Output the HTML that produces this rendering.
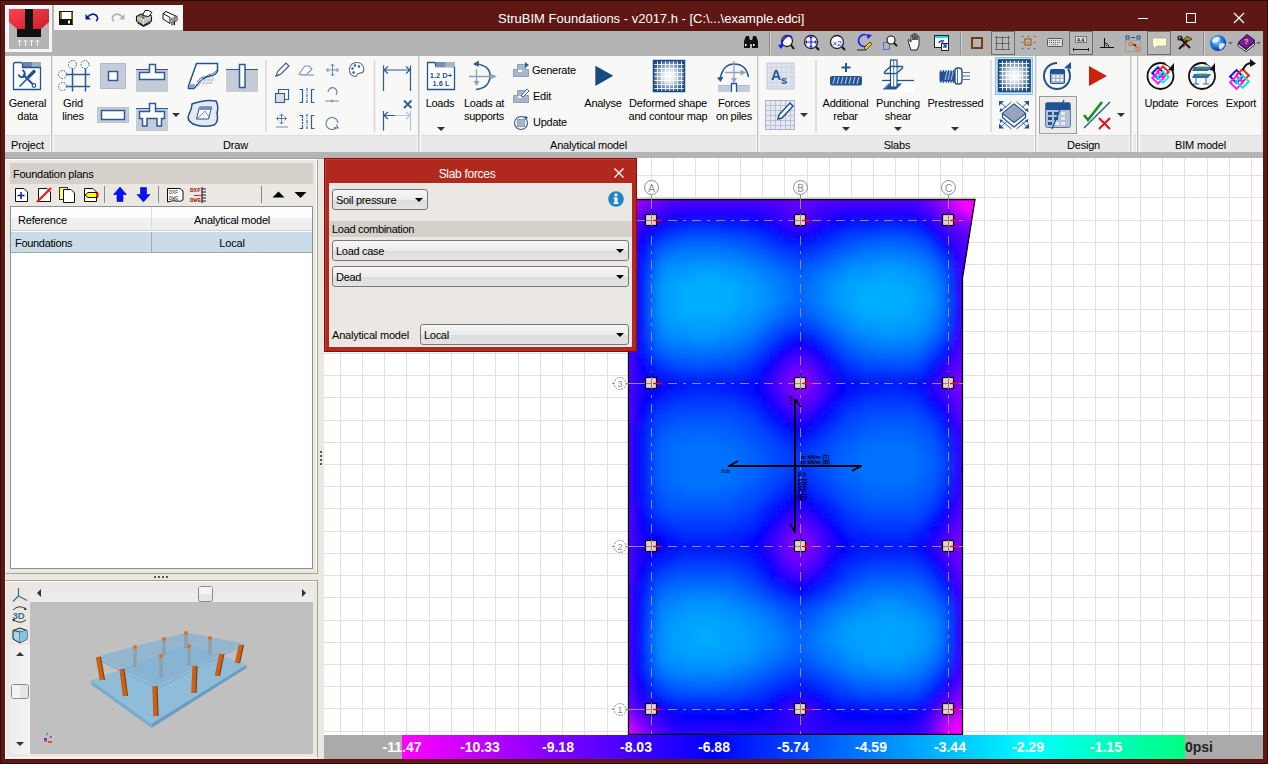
<!DOCTYPE html>
<html><head><meta charset="utf-8">
<style>
*{margin:0;padding:0;box-sizing:border-box}
html,body{width:1268px;height:764px;overflow:hidden}
body{position:relative;background:#5e1712;font-family:"Liberation Sans",sans-serif;font-size:12px;color:#000}
.a{position:absolute}
.lbl{position:absolute;font-size:11px;line-height:13px;text-align:center;color:#000;white-space:nowrap;letter-spacing:-0.25px;margin-top:1px}
.gl{position:absolute;top:135px;height:17px;background:#e9e9e9;border-top:1px solid #dedede;font-size:11px;line-height:19px;text-align:center;color:#000;letter-spacing:-0.2px}
.sep{position:absolute;top:56px;width:2px;height:96px;background:linear-gradient(90deg,#c4c4c4 50%,#e6e6e6 50%)}
</style></head><body>
<!-- frame -->
<div class="a" style="left:0;top:0;width:1268px;height:1px;background:#2c0a08"></div>
<div class="a" style="left:0;top:0;width:1px;height:764px;background:#3a0c09"></div>
<div class="a" style="left:1267px;top:0;width:1px;height:764px;background:#3a0c09"></div>
<div class="a" style="left:0;top:763px;width:1268px;height:1px;background:#2c0a08"></div>
<!-- title -->
<div class="a" style="left:498px;top:11px;width:310px;font-size:13px;line-height:15px;color:#fff;white-space:nowrap">StruBIM Foundations - v2017.h - [C:\...\example.edci]</div>
<!-- window controls -->
<div class="a" style="left:1138px;top:18px;width:10px;height:1px;background:#fff"></div>
<div class="a" style="left:1186px;top:13px;width:10px;height:10px;border:1px solid #fff"></div>
<svg class="a" style="left:1233px;top:12px" width="12" height="12"><path d="M1 1L11 11M11 1L1 11" stroke="#fff" stroke-width="1.3"/></svg>
<!-- logo -->
<div class="a" style="left:5px;top:5px;width:49px;height:51px;background:#b4b4b4"></div><div class="a" style="left:5px;top:5px;width:47px;height:47px;background:#f7f7f7"></div>
<div class="a" style="left:9px;top:9px;width:40px;height:40px;background:#b4b4b4"></div>
<!-- QAT -->
<div class="a" style="left:54px;top:5px;width:129px;height:25px;background:#f7f7f5"></div>
<!-- grey toolbar band -->
<div class="a" style="left:54px;top:30px;width:129px;height:1px;background:#b4b4b4"></div><div class="a" style="left:53px;top:31px;width:1210px;height:25px;background:#b4b4b4"></div>
<div class="a" style="left:5px;top:53px;width:48px;height:3px;background:#b4b4b4"></div>
<!-- ribbon -->
<div class="a" style="left:5px;top:56px;width:1258px;height:96px;background:#f8f8f7"></div>
<div class="a" style="left:5px;top:152px;width:1258px;height:6px;background:#b4b4b4"></div>

<!-- group labels -->
<div class="gl" style="left:5px;width:45px">Project</div>
<div class="gl" style="left:54px;width:363px">Draw</div>
<div class="gl" style="left:421px;width:335px">Analytical model</div>
<div class="gl" style="left:760px;width:274px">Slabs</div>
<div class="gl" style="left:1038px;width:91px">Design</div>
<div class="gl" style="left:1133px;width:3px"></div>
<div class="gl" style="left:1140px;width:121px">BIM model</div>
<div class="sep" style="left:51px"></div>
<div class="sep" style="left:418px"></div>
<div class="sep" style="left:757px"></div>
<div class="sep" style="left:1035px"></div>
<div class="sep" style="left:1130px"></div>
<div class="sep" style="left:1137px"></div>
<div class="a" style="left:1261px;top:56px;width:2px;height:96px;background:#e0e0e0"></div>
<!-- ribbon labels -->
<div class="lbl" style="left:5px;top:96px;width:45px">General<br>data</div>
<div class="lbl" style="left:53px;top:96px;width:40px">Grid<br>lines</div>
<div class="lbl" style="left:420px;top:96px;width:40px">Loads</div>
<div class="lbl" style="left:459px;top:96px;width:50px">Loads at<br>supports</div>
<div class="lbl" style="left:532px;top:63px;text-align:left">Generate</div>
<div class="lbl" style="left:533px;top:89px;text-align:left">Edit</div>
<div class="lbl" style="left:533px;top:115px;text-align:left">Update</div>
<div class="lbl" style="left:580px;top:96px;width:46px">Analyse</div>
<div class="lbl" style="left:624px;top:96px;width:88px">Deformed shape<br>and contour map</div>
<div class="lbl" style="left:712px;top:96px;width:44px">Forces<br>on piles</div>
<div class="lbl" style="left:818px;top:96px;width:55px">Additional<br>rebar</div>
<div class="lbl" style="left:873px;top:96px;width:50px">Punching<br>shear</div>
<div class="lbl" style="left:923px;top:96px;width:65px">Prestressed</div>
<div class="lbl" style="left:1140px;top:96px;width:43px">Update</div>
<div class="lbl" style="left:1182px;top:96px;width:40px">Forces</div>
<div class="lbl" style="left:1221px;top:96px;width:40px">Export</div>

<svg class="a" style="left:0;top:0" width="1268" height="158">
<defs>
<radialGradient id="glow" cx="50%" cy="50%" r="55%"><stop offset="0" stop-color="#fff"/><stop offset="0.35" stop-color="#dfe6f0"/><stop offset="1" stop-color="#1b4b86"/></radialGradient>
<linearGradient id="logoR" x1="0" y1="0" x2="1" y2="1"><stop offset="0" stop-color="#ff4450"/><stop offset="1" stop-color="#c81e2a"/></linearGradient>
</defs>
<!-- logo -->
<path d="M9 9H49V22L41 29H17L9 22Z" fill="url(#logoR)"/>
<rect x="25" y="9" width="8" height="20" fill="#111"/>
<rect x="17" y="29" width="24" height="8" fill="#111"/>
<g stroke="#f4f4f4" stroke-width="1" fill="none"><path d="M19.5 46V40M17.5 42L19.5 40L21.5 42M25.5 46V40M23.5 42L25.5 40L27.5 42M31.5 46V40M29.5 42L31.5 40L33.5 42M37.5 46V40M35.5 42L37.5 40L39.5 42"/></g>
<!-- QAT -->
<rect x="59.5" y="11.5" width="13" height="13" fill="#fff" stroke="#111"/><rect x="60" y="12" width="2" height="12" fill="#8a8420"/><rect x="71" y="12" width="1.5" height="12" fill="#8a8420"/><rect x="60" y="19" width="12" height="5.5" fill="#111"/><rect x="68" y="20.5" width="2" height="3" fill="#fff"/><rect x="62" y="12" width="8" height="6" fill="#fff"/>
<path d="M87 17.5Q92 12 96.5 15.5Q99 19 96 21" stroke="#0a1e9c" stroke-width="1.6" fill="none"/><path d="M85.5 14V19.5H91Z" fill="#0a1e9c"/>
<path d="M123 17.5Q118 12 113.5 15.5Q111 19 114 21" stroke="#b0b0b0" stroke-width="1.6" fill="none"/><path d="M124.5 14V19.5H119Z" fill="#b0b0b0"/>
<path d="M136.5 16.5L141 14L151.5 16L151.5 21L143.5 25.5L136.5 21Z" fill="#a8a8a8" stroke="#111" stroke-width="1.1"/><path d="M137 17L143 20L151 16.5L151 20.5L143.5 24.5L137 21Z" fill="#bdbdbd"/><path d="M143.5 20V25M137 17L143.5 20L151.5 16.5" stroke="#fff" stroke-width="0.6" fill="none"/>
<path d="M142.5 15.5L145 10.5H148.5L152 12.5L148.5 16.5Z" fill="#fff" stroke="#111" stroke-width="1"/>
<rect x="140" y="16" width="2" height="1.2" fill="#10e010"/><rect x="142" y="17" width="2" height="1.2" fill="#f01010"/>
<path d="M137.5 23L143.5 26.5L150.5 23" stroke="#111" stroke-width="1" fill="none"/>
<path d="M163 13.5L166 11.5L177 16.5V20.5L174 22V25M163 13.5V19L170 23.5V19M163 13.5L170 17.5V19" fill="#fff" stroke="#111" stroke-width="1"/><path d="M170.5 18L177 16.5V20.5L174 22L172 23Z" fill="#909090"/><path d="M172 22V25.5M174.5 21.5V25" stroke="#111" stroke-width="1"/><rect x="174" y="16" width="1.2" height="1.2" fill="#10d010"/><rect x="175.5" y="16" width="1.2" height="1.2" fill="#e01010"/>

<!-- General data -->
<rect x="23" y="62" width="9" height="6" fill="#6f82a8"/><rect x="32" y="62" width="9" height="6" fill="#9eabc6"/>
<path d="M13.5 89.5V64.5Q13.5 62.5 15.5 62.5H20.5Q22.5 62.5 22.5 64.5V67.5H40.5V89.5Z" fill="#fff" stroke="#1f5394" stroke-width="1.3"/>
<path d="M19.5 86.5L28.5 77.5" stroke="#1f5394" stroke-width="1.6"/><path d="M28 77.5L35 70.5" stroke="#1f5394" stroke-width="3.2"/>
<path d="M23 74.5L33 84.5" stroke="#1f5394" stroke-width="2"/><path d="M18.5 74.5Q20 78 23.5 77Q25.5 75 24.5 72L22.5 70" stroke="#1f5394" stroke-width="1.8" fill="none"/><circle cx="34" cy="85.5" r="1.8" fill="#fff" stroke="#1f5394" stroke-width="1.2"/>
<!-- Grid lines -->
<g stroke="#2d5b92" fill="none">
<path d="M72.5 68.5V91.5M85.5 68.5V91.5M66.5 74.5H90M66.5 86.5H90" stroke-width="1.5"/>
<g stroke-dasharray="1.6 1.2" stroke-width="1"><circle cx="72.5" cy="64.5" r="4"/><circle cx="85" cy="64.5" r="4"/><circle cx="62.5" cy="74.5" r="4"/><circle cx="62.5" cy="86.5" r="4"/></g>
</g>
<!-- column -->
<rect x="100.5" y="63.5" width="25" height="25" fill="#c6cbd8" stroke="#b0bad0"/><rect x="108.5" y="71.5" width="9" height="9" fill="#fff" stroke="#2d5b92" stroke-width="1.5"/>
<!-- footing -->
<rect x="136" y="69" width="32" height="23" fill="#c6cbd8"/><path d="M136 69.5H168" stroke="#2d5b92"/>
<path d="M139.5 72.5H149.5V64.5H155.5V72.5H164.5V79.5H139.5Z" fill="#fff" stroke="#2d5b92" stroke-width="1.5"/>
<!-- beam -->
<rect x="97.5" y="107.5" width="31" height="15" fill="#c6cbd8" stroke="#b8c0d2"/><rect x="101.5" y="110.5" width="23" height="9" fill="#fff" stroke="#2d5b92" stroke-width="1.5"/>
<!-- combined footing -->
<rect x="136" y="108" width="32" height="23" fill="#c6cbd8"/><path d="M136 108.5H168" stroke="#2d5b92"/>
<path d="M139.5 111.5H149.5V103.5H155.5V111.5H164.5V118.5H161.5V126H157V118.5H147V126H142.5V118.5H139.5Z" fill="#fff" stroke="#2d5b92" stroke-width="1.5"/>
<path d="M172 113H180L176 117Z" fill="#333"/>
<!-- slab -->
<path d="M188.5 86L196.5 63.5H217.5V71Q215 76 210 76Q203 77 197 85L194 88.5H188.5Z" fill="#fff" stroke="#1f5394" stroke-width="1.5"/>
<path d="M189 84H195L194 88H189Z" fill="#8fa0c0"/><path d="M197 82Q201 76 205 77Q209 74 212 74Q215 73 217 70" stroke="#1f5394" stroke-width="0.8" fill="none"/><path d="M198 87L202 79M202 87L206 79M206 86L210 77M210 84L213 76M197 83H213M199 80H215" stroke="#a8b4cc" stroke-width="0.7"/>
<!-- pile -->
<rect x="226" y="69" width="32" height="23" fill="#c6cbd8"/><path d="M226 69.5H258" stroke="#2d5b92"/><rect x="239.5" y="64.5" width="5.5" height="23" fill="#fff" stroke="#2d5b92" stroke-width="1.5"/>
<!-- irregular slab -->
<path d="M192 104Q205 99 216 101Q219 106 217 113Q219 122 214 125Q203 128 193 124Q186 120 189 114Q192 109 192 104Z" fill="#e6e9f0" stroke="#1f5394" stroke-width="1.5"/>
<path d="M196.5 119L199.5 107H211.5L208.5 119Z" fill="#fff" stroke="#1f5394" stroke-width="1"/><rect x="199" y="107" width="12" height="3" fill="#7b8db0"/><path d="M197 119L205 111L209 117" stroke="#5a6f98" stroke-width="0.8" fill="none"/>
<!-- separator small -->
<path d="M266 60V132" stroke="#d6d6d6" stroke-width="1.5"/>
<!-- small tools -->
<g stroke="#2d5b92" fill="none" stroke-width="1.1">
<path d="M276 76L278 71L286 63L289 66L281 74Z" fill="#fff"/><path d="M276 76L279 75" />
<path d="M299 74L305 66L309 66L312 69L306 75Z" fill="#fff" stroke="#7a8fb4"/><path d="M300 75H314" stroke="#a0b0c8" stroke-width="1.5"/>
<path d="M332.5 64V76M326.5 70H338.5M330.5 66L332.5 64L334.5 66M330.5 74L332.5 76L334.5 74M328.5 68L326.5 70L328.5 72M336.5 68L338.5 70L336.5 72" stroke="#6a88b4" stroke-width="1"/>
<path d="M357 62.5C351 62.5 349 67 349.5 71C350 76 356 78 357 75C358 72 361 74 363 72C365 69 363 62.5 357 62.5Z" fill="#fff" stroke="#5a7099"/>
</g>
<g fill="#2d5b92"><circle cx="355" cy="65.5" r="1.2"/><circle cx="359" cy="66.5" r="1.2"/><circle cx="352.5" cy="68.5" r="1.2"/><circle cx="353.5" cy="72.5" r="1.2"/></g>
<g stroke="#2d5b92" fill="none" stroke-width="1.1">
<rect x="275.5" y="93.5" width="9" height="9" fill="#d8dde8"/><path d="M278.5 93.5V89.5H288.5V99.5H284.5" />
<path d="M299.5 89.5H302.5V102.5H299.5M314.5 89.5H311.5V102.5H314.5" stroke-width="1.2"/><path d="M307 88V104" stroke-dasharray="3 1 1 1"/>
<path d="M328 92A4.5 4.5 0 1 1 336 95" stroke="#5a7ba8"/><path d="M325 101H339" stroke="#9fb0c8" stroke-width="1.5"/><circle cx="332" cy="101" r="1.5" fill="#8fa2c0" stroke="none"/>
<path d="M281.5 114V124M276.5 118.5H286.5M279.5 116L281.5 114L283.5 116M279.5 122L281.5 124L283.5 122M278.5 116.5L276.5 118.5L278.5 120.5M284.5 116.5L286.5 118.5L284.5 120.5" stroke="#5a7ba8" stroke-width="1"/>
<path d="M276 127H288" stroke="#9fb0c8" stroke-width="1.5"/>
<path d="M299.5 115.5H302.5V128.5H299.5M314.5 115.5H311.5V128.5H314.5" stroke-width="1.2"/><path d="M307 114V130" stroke-dasharray="3 1 1 1"/><path d="M302.5 118V126" stroke="#f8f8f7" stroke-dasharray="1 2"/>
<path d="M336 128A6 6 0 1 1 338 123" stroke="#5a7ba8"/><path d="M336.5 124.5L338 128L334 127.5" stroke="#5a7ba8"/>
</g>
<path d="M374.5 60V132" stroke="#d6d6d6" stroke-width="1.5"/>
<!-- dimension -->
<g stroke="#2d5b92" fill="none" stroke-width="1.2">
<path d="M383.5 65.5V91M410.5 65.5V91M384 70H410M388 66.5L384 70L388 73.5M406 66.5L410 70L406 73.5"/>
<path d="M383.5 111V130.5M384 115.5H395M388 112L384 115.5L388 119"/>
<path d="M395 115.5H410M406 112L410 115.5L406 119M410.5 111V130.5" stroke="#b8c4d8"/>
<path d="M404 100.5L411.5 108M411.5 100.5L404 108" stroke-width="1.8"/>
</g>

<!-- Loads -->
<path d="M427.5 89.5V62.5H435L436 66.5H454.5V89.5Z" fill="#fff" stroke="#1f5394" stroke-width="1.3"/>
<rect x="436" y="62" width="9" height="5" fill="#7b8db0"/><rect x="445" y="62" width="10" height="5" fill="#a5b2cb"/>
<text x="441" y="78" font-size="7.5" font-weight="bold" fill="#1f5394" text-anchor="middle" font-family="Liberation Sans">1.2 D+</text>
<text x="441" y="86" font-size="7.5" font-weight="bold" fill="#1f5394" text-anchor="middle" font-family="Liberation Sans">1.6 L</text>
<path d="M437 127H445L441 131Z" fill="#333"/>
<!-- loads at supports -->
<path d="M477 64Q491 66 490 77Q489 88 476 89.5" stroke="#2d5b92" stroke-width="1.6" fill="none"/><path d="M473 64L479 60.5L478.5 67Z" fill="#2d5b92"/>
<path d="M476.5 69V83M469 76.5H491" stroke="#8fa2c0" stroke-width="1.3"/><path d="M473.5 81L476.5 86L479.5 81Z" fill="#8fa2c0"/><path d="M490 73.5L497 76.5L490 79.5Z" fill="#8fa2c0"/>
<!-- generate/edit/update -->
<g fill="#a8b6cc" stroke="#7d91b3" stroke-width="0.8">
<path d="M513.5 69.5H517.5V64.5H525.5V69.5H528.5V76.5H513.5Z"/><rect x="518" y="70" width="4" height="2" fill="#fff" stroke="none"/>
<path d="M513.5 95.5H517.5V90.5H525.5V95.5H528.5V102.5H513.5Z"/><rect x="518" y="96" width="4" height="2" fill="#fff" stroke="none"/>
</g>
<path d="M525 62V68L529 65Z" fill="#2d5b92"/><path d="M521 96L527 89L529 91L523 97Z" fill="#fff" stroke="#2d5b92" stroke-width="0.9"/>
<circle cx="521" cy="123" r="6.5" fill="none" stroke="#2d5b92" stroke-width="1.1"/><rect x="517.5" y="119.5" width="7" height="7" fill="#a8b6cc" stroke="#7d91b3" stroke-width="0.8"/><path d="M524 116L528 117L526 120Z" fill="#2d5b92"/>
<!-- analyse -->
<path d="M595.3 65.7L613.3 75.8L595.3 86Z" fill="#174a84"/>
<!-- deformed -->
<rect x="653" y="60" width="32" height="32" fill="url(#glow)"/>
<g stroke="#fff" stroke-width="0.9" opacity="0.95"><path d="M657.5 61V91M661.5 61V91M665.5 61V91M669.5 61V91M673.5 61V91M677.5 61V91M681.5 61V91M654 64.5H684M654 68.5H684M654 72.5H684M654 76.5H684M654 80.5H684M654 84.5H684M654 88.5H684"/></g>
<rect x="653.5" y="60.5" width="31" height="31" fill="none" stroke="#1b4b86" stroke-width="1.5"/>
<!-- forces on piles -->
<rect x="718" y="85" width="32" height="7" fill="#c6cbd8"/><path d="M718 85.5H750" stroke="#b0bad0"/>
<path d="M731.5 92V83.5H736.5V92" fill="#fff" stroke="#1f5394" stroke-width="1.3"/>
<path d="M720 79Q723 64 734 64Q746 64 748.5 77" stroke="#1f5394" stroke-width="1.5" fill="none"/><path d="M717 77.5L720.5 82L723.5 77Z" fill="#1f5394"/>
<path d="M734 61V82M725 72.5H742" stroke="#8fa2c0" stroke-width="1.3"/><path d="M731 78L734 83L737 78Z" fill="#8fa2c0"/><path d="M740.5 69.5L746 72.5L740.5 75.5Z" fill="#8fa2c0"/>
<!-- As -->
<rect x="767" y="63" width="27" height="26" fill="#dfe3ec" stroke="#c0c8d8"/>
<g stroke="#c8cfdd" stroke-width="0.6"><path d="M771.5 63V89M776.5 63V89M781.5 63V89M786.5 63V89M791 63V89M767 67.5H794M767 72.5H794M767 77.5H794M767 82.5H794M767 86.5H794"/></g>
<text x="771" y="80" font-size="14" font-weight="bold" fill="#1f5394" font-family="Liberation Sans">A</text><text x="781" y="84" font-size="11" font-weight="bold" fill="#1f5394" font-family="Liberation Sans">s</text>
<!-- grid pencil -->
<rect x="765.5" y="100.5" width="29" height="29" fill="#e6e9f0" stroke="#a8b4cc"/>
<g stroke="#a8b4cc" stroke-width="0.7"><path d="M770.5 101V129M775.5 101V129M780.5 101V129M785.5 101V129M790.5 101V129M766 105.5H794M766 110.5H794M766 115.5H794M766 120.5H794M766 125.5H794"/></g>
<path d="M779 115L790 103L793 106L782 118L778 119Z" fill="#fff" stroke="#1f5394" stroke-width="1.5"/>
<path d="M800 113H808L804 117Z" fill="#333"/>
<path d="M816 60V132" stroke="#d6d6d6" stroke-width="1.5"/>
<!-- additional rebar -->
<path d="M846 63V72M841.5 67.5H850.5" stroke="#1f5394" stroke-width="2"/>
<rect x="830" y="76" width="32" height="9.5" rx="2" fill="#1f5394"/>
<g stroke="#a8bcd8" stroke-width="1.2"><path d="M833 84L835 77M837 84L839 77M841 84L843 77M845 84L847 77M849 84L851 77M853 84L855 77M857 84L859 77"/></g>
<path d="M842 127H850L846 131Z" fill="#333"/>
<!-- punching shear -->
<rect x="882" y="80" width="32" height="12" fill="#fff"/>
<path d="M882 80.5H914" stroke="#1f5394" stroke-width="1.3"/>
<path d="M882.5 89.5L888.5 83.5H902L896 89.5Z" fill="#1f5394"/><path d="M885 88.5L889 84.5" stroke="#b8c4d8" stroke-width="0.8"/>
<rect x="890.5" y="60" width="6.5" height="27" fill="#fff" stroke="#1f5394" stroke-width="1.2"/><path d="M893.7 60V87" stroke="#1f5394" stroke-width="0.8"/>
<path d="M891 66.5H901.5Q903.5 66.5 902 68.5L897.5 72.5Q896.5 73.5 895 73.5H885.5Q883.5 73.5 885 71.5L889.5 67.5Q890 66.5 891 66.5Z" fill="none" stroke="#1f5394" stroke-width="1.4"/>
<rect x="891.2" y="67.3" width="5.2" height="5.4" fill="#fff"/><path d="M893.7 67V73" stroke="#1f5394" stroke-width="0.8"/>
<path d="M894 127H902L898 131Z" fill="#333"/>
<!-- prestressed -->
<path d="M939.5 71.5H955V81.5H939.5Z" fill="#1f5394"/>
<g stroke="#1f5394" stroke-width="1"><path d="M941 70V83M943.5 70V83M946 70V83M948.5 70V83M951 70V83M953.5 70V83"/></g>
<g stroke="#c8d2e2" stroke-width="0.9"><path d="M945 80L947 72M948 80L950 72M951 80L953 72"/></g>
<path d="M955 70.5Q955 68 957.5 68H959Q962 68 962 71V81Q962 84 959 84H957.5Q955 84 955 81.5Z" fill="#fff" stroke="#1f5394" stroke-width="1.4"/><path d="M957.5 69V83" stroke="#1f5394" stroke-width="0.8"/>
<path d="M962 72.5H970M962 76H970M962 79.5H970" stroke="#5a78a8" stroke-width="1.1"/>
<path d="M951 127H959L955 131Z" fill="#333"/>
<path d="M991 60V132" stroke="#d6d6d6" stroke-width="1.5"/>
<!-- contour selected -->
<rect x="995.5" y="57.5" width="37" height="37" fill="#c5e2f7" stroke="#7fc3ee"/>
<rect x="998" y="59.5" width="32.5" height="32.5" fill="url(#glow)"/>
<g stroke="#fff" stroke-width="0.9"><path d="M1002.5 60V92M1006.5 60V92M1010.5 60V92M1014.5 60V92M1018.5 60V92M1022.5 60V92M1026.5 60V92M999 63.5H1030M999 67.5H1030M999 71.5H1030M999 75.5H1030M999 79.5H1030M999 83.5H1030M999 87.5H1030"/></g>
<rect x="998.5" y="60" width="31.5" height="31.5" fill="none" stroke="#1b4b86" stroke-width="1.5"/>
<!-- slab expand -->
<path d="M1002.5 113.5L1014 104L1025.5 113.5V117.5L1014 127L1002.5 117.5Z" fill="#fff" stroke="#1f5394" stroke-width="1.3" stroke-linejoin="round"/>
<path d="M1003.5 113.5L1014 105L1024.5 113.5L1014 122Z" fill="#98a4be"/><path d="M1002.5 113.5L1014 122.5L1025.5 113.5" stroke="#1f5394" stroke-width="1.2" fill="none"/>
<g stroke="#1f5394" stroke-width="0.9"><path d="M1000 102L1006 107.5M1028 102L1022 107.5M1000 127.5L1006 122M1028 127.5L1022 122M1011.5 102L1000.5 111M1016.5 102L1027.5 111M1011.5 129L1000.5 120M1016.5 129L1027.5 120"/></g>
<g fill="#1f5394"><path d="M999 101H1004L999 106Z"/><path d="M1029 101H1024L1029 106Z"/><path d="M999 128.5H1004L999 123.5Z"/><path d="M1029 128.5H1024L1029 123.5Z"/><path d="M999.5 112L1000.5 108L1003 110.5Z"/><path d="M1028.5 112L1027.5 108L1025 110.5Z"/><path d="M999.5 119L1000.5 123L1003 120.5Z"/><path d="M1028.5 119L1027.5 123L1025 120.5Z"/></g>
<!-- design -->
<circle cx="1057" cy="76" r="13" fill="none" stroke="#1f5394" stroke-width="2"/><path d="M1057 63A13 13 0 0 1 1068 69" stroke="#f8f8f7" stroke-width="3" fill="none"/>
<path d="M1064 68L1071 62V69Z" fill="#1f5394"/>
<rect x="1050.5" y="69.5" width="14" height="14" rx="1.5" fill="#a8b6cc" stroke="#1f5394" stroke-width="1.2"/><rect x="1051" y="70" width="13" height="4" fill="#1f5394"/>
<g fill="#fff"><rect x="1052.5" y="75.5" width="2.5" height="2"/><rect x="1056.5" y="75.5" width="2.5" height="2"/><rect x="1060.5" y="75.5" width="2.5" height="2"/><rect x="1052.5" y="79" width="2.5" height="2"/><rect x="1056.5" y="79" width="2.5" height="2"/><rect x="1060.5" y="79" width="2.5" height="2"/></g>
<path d="M1089 66V86L1107 76Z" fill="#c8240e"/>
<rect x="1039.5" y="96.5" width="37" height="37" fill="#ececec" stroke="#9a9a9a"/>
<rect x="1045.5" y="102.5" width="25" height="25" rx="2" fill="#b4c1d6" stroke="#5a76a8" stroke-width="1"/>
<rect x="1046" y="103" width="24" height="7" fill="#1f5394"/>
<g fill="#1f5394"><rect x="1048" y="112" width="4" height="3"/><rect x="1054" y="112" width="4" height="3"/><rect x="1048" y="117" width="4" height="3"/><rect x="1054" y="117" width="4" height="3"/><rect x="1048" y="122" width="4" height="3"/></g>
<g fill="#e6ebf2"><rect x="1061" y="112" width="4" height="3"/><rect x="1061" y="117" width="4" height="3"/><rect x="1061" y="122" width="4" height="3"/><rect x="1055" y="122" width="4" height="3"/></g>
<path d="M1064 100L1052 129" stroke="#1f5394" stroke-width="1.3"/>
<path d="M1084 115L1088 120L1102 102" stroke="#17901e" stroke-width="2.6" fill="none"/>
<path d="M1084 128L1110 102" stroke="#1f5394" stroke-width="1.2"/>
<path d="M1099 118L1110 129M1110 118L1099 129" stroke="#e0101c" stroke-width="2"/>
<path d="M1117 113H1125L1121 117Z" fill="#333"/>
<!-- BIM -->
<circle cx="1160.5" cy="76" r="13" fill="none" stroke="#111" stroke-width="1.8"/><path d="M1166 62.5A13 13 0 0 1 1173 70" stroke="#f8f8f7" stroke-width="3" fill="none"/><path d="M1168 70L1174 63V71Z" fill="#111"/>
<g fill="none" stroke-width="2"><rect x="1154" y="69" width="8" height="8" transform="rotate(45 1158 73)" stroke="#1010ff"/><rect x="1159" y="68" width="8" height="8" transform="rotate(45 1163 72)" stroke="#ff1818"/><rect x="1154" y="74" width="8" height="8" transform="rotate(45 1158 78)" stroke="#ff18ff"/><rect x="1159" y="73" width="8" height="8" transform="rotate(45 1163 77)" stroke="#18e8f0"/></g>
<circle cx="1202" cy="76" r="13" fill="none" stroke="#111" stroke-width="1.8"/><path d="M1207 62.5A13 13 0 0 1 1214 70" stroke="#f8f8f7" stroke-width="3" fill="none"/><path d="M1209 70L1215 63V71Z" fill="#111"/>
<path d="M1194 67H1211L1208 71H1192Z M1194 74H1211L1208 78H1192Z" fill="#2a6ab0"/><path d="M1197 67.5H1207M1197 74.5H1207" stroke="#4a9a40" stroke-width="2"/>
<path d="M1196 78V84M1206 78V84M1193 84H1199M1203 84H1209" stroke="#2a6ab0" stroke-width="1"/>
<g fill="none" stroke-width="2"><rect x="1232" y="72" width="9" height="9" transform="rotate(45 1236.5 76.5)" stroke="#1010ff"/><rect x="1238" y="71" width="9" height="9" transform="rotate(45 1242.5 75.5)" stroke="#ff1818"/><rect x="1232" y="78" width="9" height="9" transform="rotate(45 1236.5 82.5)" stroke="#ff18ff"/><rect x="1238" y="77" width="9" height="9" transform="rotate(45 1242.5 81.5)" stroke="#18e0e0"/></g>
<path d="M1243 70Q1245 63 1252 63" stroke="#111" stroke-width="2" fill="none"/><path d="M1250 59L1256 63.5L1250 67Z" fill="#111"/>

<!-- grey toolbar icons -->
<g fill="#111"><path d="M744 41L746 36H749L750 41V48H744Z"/><path d="M752 41L753 36H756L758 41V48H752Z"/><rect x="749" y="40" width="3" height="4"/></g>
<g fill="#fff"><rect x="745" y="44" width="1.5" height="2"/><rect x="753" y="44" width="1.5" height="2"/></g>
<path d="M769.5 32V55" stroke="#8a8a8a"/><path d="M770.5 32V55" stroke="#cfcfcf"/>
<!-- zoom prev -->
<circle cx="787" cy="41" r="5.5" fill="#fff" stroke="#222" stroke-width="1.3"/><path d="M791 45L794 49" stroke="#111" stroke-width="2"/>
<path d="M792 38Q790 34 786 37Q782 40 781 46" stroke="#1a1aff" stroke-width="1.6" fill="none"/><path d="M778 45H784L781 49Z" fill="#1a1aff"/>
<!-- zoom all -->
<circle cx="811" cy="42" r="6.5" fill="#fff" stroke="#222" stroke-width="1.3"/><path d="M816 47L819 50" stroke="#111" stroke-width="2"/>
<path d="M811 37V47M806 42H816" stroke="#1a1aff" stroke-width="1.2"/><g fill="#1a1aff"><path d="M809 38L811 36L813 38Z"/><path d="M809 46L811 48L813 46Z"/><path d="M807 40L805 42L807 44Z"/><path d="M815 40L817 42L815 44Z"/></g>
<!-- x2 -->
<circle cx="837" cy="42" r="6.5" fill="#fff" stroke="#222" stroke-width="1.3"/><path d="M842 47L845 50" stroke="#111" stroke-width="2"/>
<text x="832.5" y="45.5" font-size="8" fill="#1a1aff" font-family="Liberation Sans">×2</text>
<!-- zoom window redraw -->
<path d="M869 37A6 6 0 1 0 869 46" stroke="#1a1aff" stroke-width="1.6" fill="none" transform="rotate(-30 863 42)"/><path d="M866 34L872 35L868 39Z" fill="#1a1aff"/>
<path d="M864 48L870 42L872 44L866 50Z" fill="#f0d020" stroke="#111" stroke-width="0.7"/><path d="M857 50H866" stroke="#222"/>
<!-- zoom window -->
<rect x="883.5" y="42.5" width="6" height="7" fill="none" stroke="#1a1aff" stroke-dasharray="1 1"/><circle cx="891" cy="40" r="4" fill="#fff" stroke="#222" stroke-width="1.2"/><path d="M894 43L897 46" stroke="#111" stroke-width="1.8"/>
<!-- hand -->
<path d="M911 50L909 44L908 40Q908 39 909.5 40L911 42V36Q911 35 912 35Q913 35 913 36V40V34.5Q913 33.5 914 33.5Q915 33.5 915 34.5V40V35Q915 34 916 34Q917 34 917 35V40V37Q917 36 918 36Q919 36 919 37V45L917 50Z" fill="#fff" stroke="#111" stroke-width="0.9"/>
<!-- window -->
<rect x="934.5" y="35.5" width="14" height="12" fill="#fff" stroke="#222"/><rect x="935" y="36" width="13" height="2" fill="#22d8f8"/><path d="M939 43Q940 40 944 41" stroke="#1a50c0" stroke-width="1.5" fill="none"/><rect x="941.5" y="43.5" width="7" height="7" fill="#fff" stroke="#222"/><path d="M942 42L946 47M946 44V47H943" stroke="#1a50c0" stroke-width="1.3" fill="none"/>
<path d="M960.5 32V55" stroke="#8a8a8a"/><path d="M961.5 32V55" stroke="#cfcfcf"/>
<!-- brown square -->
<rect x="972" y="38" width="10" height="10" fill="none" stroke="#7a3a0a" stroke-width="2"/>
<!-- pressed grid -->
<rect x="991.5" y="31.5" width="23" height="23" fill="#b9b9b9" stroke="#6e6e6e"/>
<g stroke="#555" stroke-width="0.8"><path d="M996.5 36V50M1002.5 36V50M1008.5 36V50M995 37.5H1010M995 43.5H1010M995 49.5H1010"/></g>
<!-- snap -->
<g fill="#333"><rect x="1022" y="36" width="1" height="1"/><rect x="1028" y="36" width="1" height="1"/><rect x="1034" y="36" width="1" height="1"/><rect x="1022" y="42" width="1" height="1"/><rect x="1034" y="42" width="1" height="1"/><rect x="1022" y="48" width="1" height="1"/><rect x="1028" y="48" width="1" height="1"/><rect x="1034" y="48" width="1" height="1"/><rect x="1028" y="42" width="1" height="1"/></g>
<rect x="1025" y="39" width="6" height="6" fill="none" stroke="#b0600a" stroke-width="1.2"/>
<!-- keyboard -->
<rect x="1047.5" y="38.5" width="15" height="8" rx="1" fill="#ddd" stroke="#555"/><path d="M1049 40.5H1061M1049 42.5H1061M1051 44.5H1059" stroke="#666" stroke-width="1" stroke-dasharray="1 1"/>
<!-- pressed ruler -->
<rect x="1069.5" y="31.5" width="23" height="23" fill="#b9b9b9" stroke="#6e6e6e"/>
<rect x="1075.5" y="36.5" width="11" height="6" fill="#ddd" stroke="#777"/><text x="1077" y="41.5" font-size="5" font-weight="bold" fill="#111" font-family="Liberation Sans">4.4</text>
<path d="M1073.5 48V51M1088.5 48V51M1074 49.5H1088" stroke="#222" stroke-width="1"/>
<!-- angle -->
<path d="M1100 47.5H1114M1104.5 47.5V38" stroke="#111" stroke-width="1.1"/><path d="M1104.5 43A4.5 4.5 0 0 1 1109 47.5" stroke="#111" fill="none"/><rect x="1106" y="45" width="1" height="1" fill="#111"/>
<!-- layers -->
<rect x="1126" y="36" width="3" height="3" fill="none" stroke="#1a50a0"/><path d="M1131 37.5H1135" stroke="#1a50a0"/><rect x="1137" y="36" width="3" height="3" fill="none" stroke="#1a50a0"/>
<rect x="1125.5" y="40.5" width="15" height="11" fill="none" stroke="#888" stroke-dasharray="1 1"/>
<rect x="1129" y="42.5" width="3" height="3" fill="none" stroke="#e07030"/><path d="M1132 44H1136V47" stroke="#e07030"/><rect x="1136" y="47" width="3" height="3" fill="none" stroke="#e07030"/>
<!-- pressed bubble -->
<rect x="1147.5" y="31.5" width="23" height="23" fill="#b9b9b9" stroke="#6e6e6e"/>
<path d="M1153 38H1165.5Q1166.5 38 1166.5 39V45Q1166.5 46 1165.5 46H1157L1153.5 49V46Q1152.5 46 1152.5 45V39Q1152.5 38 1153 38Z" fill="#fffbd0" stroke="#999" stroke-width="0.6"/>
<!-- tools -->
<path d="M1179 49L1190 38M1180 38L1190 48" stroke="#111" stroke-width="1.8"/><path d="M1183 40L1187 36L1192 39L1189 41Z" fill="#9a8a10" stroke="#111" stroke-width="0.6"/><path d="M1183 47L1187 43" stroke="#c02020" stroke-width="1.2"/><circle cx="1180" cy="38" r="2" fill="none" stroke="#111" stroke-width="1.2"/>
<path d="M1203.5 32V55" stroke="#8a8a8a"/><path d="M1204.5 32V55" stroke="#cfcfcf"/>
<!-- globe -->
<defs><radialGradient id="gl2" cx="40%" cy="35%" r="65%"><stop offset="0" stroke-color="#fff" stop-color="#bfe8ff"/><stop offset="0.5" stop-color="#2a8ae8"/><stop offset="1" stop-color="#0a2ab0"/></radialGradient></defs>
<circle cx="1218" cy="43" r="8" fill="url(#gl2)"/><path d="M1212 40Q1215 36 1219 37Q1221 39 1218 41Q1216 43 1213 43Z M1219 44Q1223 42 1225 44Q1224 48 1220 50Q1218 47 1219 44Z" fill="#e8f8ff" opacity="0.9"/>
<path d="M1228 42H1233L1230.5 44.5Z" fill="#666"/>
<path d="M1238 43.5L1246 49.5L1254.5 42V45L1246 51.5L1238 46Z" fill="#fff" stroke="#111" stroke-width="0.9"/>
<path d="M1238 42.5L1247 34.5L1255 40.5L1246 48.5Z" fill="#7c18a8" stroke="#111" stroke-width="0.9"/><path d="M1239 44L1246 49.5L1254.5 42.5" stroke="#5a0a80" stroke-width="1" fill="none"/>
<text x="1244" y="44" font-size="7.5" font-weight="bold" fill="#f4e020" font-family="Liberation Sans">?</text>
<path d="M1256 42H1261L1258.5 44.5Z" fill="#666"/>
</svg>
<!-- body -->
<div class="a" style="left:5px;top:158px;width:319px;height:601px;background:#ebe8e3"></div>
<div class="a" style="left:5px;top:158px;width:1258px;height:1px;background:#a29c8a"></div>
<!-- top panel frame -->
<div class="a" style="left:5px;top:159px;width:313px;height:415px;border-left:1px solid #fff;border-top:1px solid #fff;border-right:1px solid #a8a48c;border-bottom:1px solid #a8a48c"></div><div class="a" style="left:316px;top:160px;width:1px;height:413px;background:#fff"></div>
<div class="a" style="left:10px;top:163px;width:303px;height:21px;background:#d5d1ca;font-size:11px;line-height:23px;padding-left:3px;color:#000;letter-spacing:-0.25px">Foundation plans</div>
<!-- list -->
<div class="a" style="left:10px;top:206px;width:303px;height:363px;background:#fff;border:1px solid #8a909a"></div>
<div class="a" style="left:11px;top:207px;width:301px;height:24px;background:linear-gradient(#fff 0%,#fdfdfd 45%,#f0f1f3 50%,#eceef0 100%);border-bottom:1px solid #d0d0d0"></div>
<div class="a" style="left:151px;top:207px;width:1px;height:24px;background:#dcdcdc"></div>
<div class="a" style="left:18px;top:208px;font-size:11px;line-height:24px;color:#000;letter-spacing:-0.2px">Reference</div>
<div class="a" style="left:152px;top:208px;width:160px;text-align:center;font-size:11px;line-height:24px;color:#000;letter-spacing:-0.25px">Analytical model</div>
<div class="a" style="left:11px;top:232px;width:301px;height:21px;background:#c9dce7;border-bottom:1px solid #a8a8a8"></div>
<div class="a" style="left:151px;top:232px;width:1px;height:21px;background:#a8a8a8"></div>
<div class="a" style="left:15px;top:233px;font-size:11px;line-height:21px;color:#000;letter-spacing:-0.3px">Foundations</div>
<div class="a" style="left:152px;top:233px;width:160px;text-align:center;font-size:11px;line-height:21px;color:#000;letter-spacing:-0.2px">Local</div>
<svg class="a" style="left:5px;top:180px" width="312" height="30">
<path d="M10.5 8.5H19L22.5 12V21.5H10.5Z" fill="#fff" stroke="#111"/><path d="M12.5 14.5H19.5M16 11V18" stroke="#0a1a90" stroke-width="1.5" transform="translate(0 1)"/>
<path d="M33.5 8.5H42L45.5 12V21.5H33.5Z" fill="#fff" stroke="#111"/><path d="M32 22L46 8" stroke="#ff1010" stroke-width="2.2"/>
<rect x="54.5" y="7.5" width="8" height="12" fill="#ffff70" stroke="#333"/><path d="M58.5 9.5H66L69.5 13V22.5H58.5Z" fill="#fff" stroke="#111"/>
<path d="M79.5 8.5H88L91.5 12V21.5H79.5Z" fill="#fff" stroke="#111"/><path d="M80 15L83 12.5H92.5V17.5H83Z" fill="#ffff00" stroke="#111" stroke-width="1"/><rect x="91" y="13" width="2.5" height="4" fill="#ee1010"/>
<path d="M99.5 6V23" stroke="#8a8a8a"/>
<path d="M108.5 14.5L115 7L121.5 14.5H118V21.5H112V14.5Z" fill="#0a10ff" stroke="#001080" stroke-width="0.6"/>
<path d="M132 14.5L138.5 22L145 14.5H141.5V7.5H135.5V14.5Z" fill="#0a10ff" stroke="#001080" stroke-width="0.6"/>
<path d="M153.5 6V23" stroke="#8a8a8a"/>
<path d="M162.5 8.5H175L178 11V20Q176 22 172 21Q168 20 162.5 22Z" fill="#fff" stroke="#111"/><text x="164" y="14" font-size="5" font-family="Liberation Mono" fill="#222">DXF</text><text x="164" y="19.5" font-size="5" font-family="Liberation Mono" fill="#222">DWG</text>
<text x="185" y="12" font-size="6" font-weight="bold" font-family="Liberation Mono" fill="#a01010">DXF</text><text x="185" y="22" font-size="6" font-weight="bold" font-family="Liberation Mono" fill="#a01010">DWG</text><path d="M189 15.5H196" stroke="#ee2020"/><path d="M197 7V23M197 9H201M197 12H201M197 15H201M197 18H201M197 21H201" stroke="#222" stroke-width="1.2"/>
<path d="M256.5 6V23" stroke="#8a8a8a"/>
<path d="M267.5 17.5L273.5 11.5L279.5 17.5Z" fill="#000"/>
<path d="M289.5 12L301.5 12L295.5 18Z" fill="#000"/>
</svg>
<!-- splitter grip -->
<svg class="a" style="left:152px;top:575px" width="20" height="4"><g fill="#555"><rect x="2" y="1" width="2" height="2"/><rect x="6" y="1" width="2" height="2"/><rect x="10" y="1" width="2" height="2"/><rect x="14" y="1" width="2" height="2"/></g></svg>
<svg class="a" style="left:319px;top:449px" width="4" height="20"><g fill="#555"><rect x="1" y="2" width="2" height="2"/><rect x="1" y="6" width="2" height="2"/><rect x="1" y="10" width="2" height="2"/><rect x="1" y="14" width="2" height="2"/></g></svg>
<!-- bottom panel frame -->
<div class="a" style="left:5px;top:580px;width:313px;height:178px;border-left:1px solid #fff;border-top:1px solid #a8a48c;border-right:1px solid #a8a48c;border-bottom:1px solid #fff"></div>
<div class="a" style="left:6px;top:581px;width:310px;height:176px;border-top:1px solid #fff"></div>
<div class="a" style="left:30px;top:586px;width:283px;height:16px;background:linear-gradient(#e8e8e8,#eeeeee)"></div>
<div class="a" style="left:30px;top:602px;width:283px;height:152px;background:#c0c0c0"></div>
<div class="a" style="left:10px;top:645px;width:20px;height:109px;background:linear-gradient(90deg,#ececec,#f4f4f4)"></div>

<svg class="a" style="left:0;top:580px" width="320" height="180">
<!-- left icons -->
<path d="M18.5 8V16M18.5 16L13 21.5M18.5 16L27 20.5" stroke="#3a7090" stroke-width="1.2" fill="none"/>
<text x="12.5" y="38.5" font-size="9.5" font-weight="bold" fill="#3a7090" font-family="Liberation Sans">3D</text>
<path d="M13 30Q19 24 26 29M13 39Q19 45 26 40" stroke="#333" stroke-width="1" fill="none"/><path d="M25 27L27 30L24 30Z M14 42L12 39L15 39Z" fill="#333"/>
<path d="M13 50.5L20 48L27 50.5V59L20 63L13 59Z" fill="#a6d6ee" stroke="#222" stroke-width="1"/><path d="M20 52V63M13 50.5L20 52L27 50.5" stroke="#222" stroke-width="0.8" fill="none"/><path d="M20 52V63L27 59V50.5Z" fill="#88c0e0"/>
<!-- vertical scroll -->
<path d="M16 76L20 72L24 76Z" fill="#333"/>
<rect x="11.5" y="104.5" width="17" height="14" rx="2" fill="#e6e6e6" stroke="#8a8a8a"/><rect x="12" y="105" width="8" height="13" fill="#f4f4f4"/>
<path d="M16 162L20 166L24 162Z" fill="#333"/>
<!-- horizontal scroll -->
<path d="M41 9L37 13L41 17Z" fill="#333"/>
<rect x="198.5" y="6.5" width="14" height="15" rx="2" fill="#e6e6e6" stroke="#8a8a8a"/><rect x="199" y="7" width="13" height="7" fill="#f4f4f4"/>
<path d="M302 9L306 13L302 17Z" fill="#333"/>
<!-- axes mini -->
<g stroke-width="1.3"><path d="M46 155.5L48 152.5" stroke="#20c020"/><path d="M44 159H47M50 157.5L51.5 156.5" stroke="#2020ff"/><path d="M44 161H47M48 162H52" stroke="#ff2020"/></g>
</svg>
<svg class="a" style="left:80px;top:620px" width="180" height="120">
<!-- lower slab -->
<path d="M11 60.5L108 24L166.5 44.8L71.5 103.7Z" fill="#8fbcd9"/>
<path d="M11 60.5L71.5 103.7V108L11 64.5Z" fill="#7aacd0"/><path d="M71.5 103.7L166.5 44.8V48L71.5 108Z" fill="#6a9cc0"/>
<!-- upper slab -->
<path d="M15.7 37L106.8 12.6L163.3 23.6L77 67.5Z" fill="#86b2d2" fill-opacity="0.78"/>
<path d="M15.7 37L77 67.5L163.3 23.6" stroke="#b8d4e8" stroke-width="1" fill="none"/>
<path d="M15.7 37V39L77 69.5L163.3 25.6V23.6L77 67.5Z" fill="#80b0d2"/>
<!-- back grey columns -->
<g stroke="#8e9ea6" stroke-width="3.5" fill="none" opacity="0.9"><path d="M55 27V47M84 19V35M106 13V28M130 18V35M81 36V58M109 26V45"/></g>
<g fill="#e07020"><circle cx="55" cy="27" r="2"/><circle cx="84" cy="19" r="2"/><circle cx="106" cy="13" r="2"/><circle cx="130" cy="18" r="2"/><circle cx="81" cy="36" r="2"/><circle cx="109" cy="26" r="2"/></g>
<!-- front orange columns -->
<g stroke="#cc6014" stroke-width="4.5" fill="none" stroke-linecap="butt">
<path d="M18 37L22 60M41.6 49L45 76M74.6 66L75.5 96M114.6 46L113.5 73M141.4 34L137 56M161 25L157 43"/>
</g>
<g stroke="#8a3a08" stroke-width="1.2" fill="none"><path d="M20.5 37L24.5 60M44 49L47.5 76M77 66L78 96M117 46L116 73M143.9 34L139.5 56M163.5 25L159.5 43"/></g>
</svg>
<!-- canvas -->
<svg class="a" style="left:324px;top:158px" width="939" height="577"><rect width="939" height="577" fill="#fff"/><path d="M16.5 0V577M38.5 0V577M60.5 0V577M82.5 0V577M105.5 0V577M127.5 0V577M149.5 0V577M171.5 0V577M194.5 0V577M216.5 0V577M238.5 0V577M260.5 0V577M283.5 0V577M305.5 0V577M327.5 0V577M349.5 0V577M371.5 0V577M394.5 0V577M416.5 0V577M438.5 0V577M460.5 0V577M483.5 0V577M505.5 0V577M527.5 0V577M549.5 0V577M571.5 0V577M594.5 0V577M616.5 0V577M638.5 0V577M660.5 0V577M683.5 0V577M705.5 0V577M727.5 0V577M749.5 0V577M771.5 0V577M794.5 0V577M816.5 0V577M838.5 0V577M860.5 0V577M883.5 0V577M905.5 0V577M927.5 0V577M0 17.5H939M0 39.5H939M0 62.5H939M0 84.5H939M0 106.5H939M0 128.5H939M0 151.5H939M0 173.5H939M0 195.5H939M0 217.5H939M0 239.5H939M0 262.5H939M0 284.5H939M0 306.5H939M0 328.5H939M0 350.5H939M0 373.5H939M0 395.5H939M0 417.5H939M0 439.5H939M0 462.5H939M0 484.5H939M0 506.5H939M0 528.5H939M0 550.5H939M0 573.5H939" stroke="#e0e0e0" stroke-width="1" fill="none"/></svg>
<!-- slabsvg --><svg class="a" style="left:324px;top:158px" width="939" height="577" viewBox="324 158 939 577"><defs><clipPath id="slab"><path d="M628 199H975L962.5 278V734H628Z"/></clipPath><filter id="bl" x="-10%" y="-10%" width="120%" height="120%"><feGaussianBlur stdDeviation="5"/></filter></defs><g clip-path="url(#slab)"><g filter="url(#bl)"><path fill="#ea00ff" d="M616 188h8v8h-8zM616 196h8v8h-8zM624 724h8v8h-8zM976 732h8v8h-8zM616 740h8v8h-8zM952 740h8v8h-8z"/><path fill="#f600ff" d="M624 188h8v8h-8zM624 196h8v8h-8zM952 196h8v8h-8zM960 716h8v8h-8zM952 724h8v8h-8zM968 724h8v8h-8zM616 732h8v8h-8zM624 740h8v8h-8z"/><path fill="#ae00ff" d="M632 188h8v8h-8zM944 188h8v8h-8zM632 196h8v8h-8zM960 212h8v8h-8zM952 708h8v8h-8zM616 716h8v8h-8zM944 716h8v8h-8zM632 740h8v8h-8z"/><path fill="#9600ff" d="M640 188h8v8h-8zM936 188h8v8h-8zM640 196h8v8h-8zM936 196h8v8h-8zM944 204h8v8h-8zM616 212h8v8h-8zM952 212h8v8h-8zM968 220h8v8h-8zM624 708h8v8h-8zM944 708h8v8h-8zM936 724h8v8h-8zM640 732h8v8h-8zM936 740h8v8h-8z"/><path fill="#7e00ff" d="M648 188h8v8h-8zM928 188h8v8h-8zM648 196h8v8h-8zM928 196h8v8h-8zM944 212h8v8h-8zM616 220h16v8h-16zM792 372h16v8h-16zM960 372h8v8h-8zM960 380h8v8h-8zM792 388h16v8h-16zM960 388h8v8h-8zM792 532h16v8h-16zM960 532h8v8h-8zM960 540h8v8h-8zM792 548h16v8h-16zM960 548h8v8h-8zM960 692h8v8h-8zM624 700h8v8h-8zM968 700h8v8h-8zM976 708h8v8h-8zM632 716h8v8h-8zM936 716h8v8h-8zM640 724h8v8h-8zM640 740h8v8h-8z"/><path fill="#7200ff" d="M656 188h8v8h-8zM656 196h8v8h-8zM640 204h8v8h-8zM936 204h8v8h-8zM952 220h16v8h-16zM624 228h8v8h-8zM968 228h8v8h-8zM960 364h8v8h-8zM784 380h8v8h-8zM808 380h8v8h-8zM952 380h8v8h-8zM960 396h8v8h-8zM960 524h8v8h-8zM784 540h8v8h-8zM808 540h8v8h-8zM952 540h8v8h-8zM784 548h8v8h-8zM808 548h8v8h-8zM792 556h16v8h-16zM960 556h8v8h-8zM960 564h8v8h-8zM960 684h8v8h-8zM968 692h8v8h-8zM616 700h8v8h-8zM976 700h8v8h-8zM648 732h8v8h-8zM928 732h8v8h-8z"/><path fill="#6600ff" d="M664 188h16v8h-16zM776 188h48v8h-48zM912 188h16v8h-16zM664 196h8v8h-8zM776 196h48v8h-48zM920 196h8v8h-8zM632 212h8v8h-8zM936 212h8v8h-8zM616 228h8v8h-8zM976 228h8v8h-8zM968 236h8v8h-8zM960 356h8v8h-8zM792 364h16v8h-16zM968 364h8v8h-8zM784 372h8v8h-8zM808 372h8v8h-8zM952 372h8v8h-8zM968 372h8v8h-8zM968 380h8v8h-8zM784 388h8v8h-8zM808 388h8v8h-8zM952 388h8v8h-8zM968 388h8v8h-8zM792 396h16v8h-16zM968 396h8v8h-8zM960 404h8v8h-8zM960 412h8v8h-8zM960 508h8v8h-8zM960 516h8v8h-8zM792 524h16v8h-16zM968 524h8v8h-8zM784 532h8v8h-8zM808 532h8v8h-8zM952 532h8v8h-8zM968 532h8v8h-8zM968 540h8v8h-8zM952 548h8v8h-8zM968 548h8v8h-8zM968 556h8v8h-8zM960 572h8v8h-8zM960 676h8v8h-8zM968 684h8v8h-8zM616 692h16v8h-16zM952 692h8v8h-8zM944 700h8v8h-8zM936 708h8v8h-8zM648 740h8v8h-8zM928 740h8v8h-8z"/><path fill="#5a00ff" d="M680 188h96v8h-96zM824 188h88v8h-88zM672 196h104v8h-104zM824 196h96v8h-96zM648 204h8v8h-8zM792 204h16v8h-16zM928 204h8v8h-8zM944 220h8v8h-8zM960 228h8v8h-8zM616 236h16v8h-16zM976 236h8v8h-8zM616 244h16v8h-16zM968 244h16v8h-16zM616 252h8v8h-8zM968 252h8v8h-8zM616 260h8v8h-8zM616 268h8v8h-8zM616 332h8v8h-8zM616 340h8v8h-8zM960 340h8v8h-8zM616 348h8v8h-8zM960 348h16v8h-16zM616 356h16v8h-16zM968 356h16v8h-16zM616 364h16v8h-16zM784 364h8v8h-8zM808 364h8v8h-8zM952 364h8v8h-8zM976 364h8v8h-8zM616 372h16v8h-16zM976 372h8v8h-8zM616 380h16v8h-16zM776 380h8v8h-8zM816 380h8v8h-8zM944 380h8v8h-8zM976 380h8v8h-8zM616 388h16v8h-16zM976 388h8v8h-8zM616 396h16v8h-16zM784 396h8v8h-8zM808 396h8v8h-8zM952 396h8v8h-8zM976 396h8v8h-8zM616 404h16v8h-16zM968 404h16v8h-16zM616 412h16v8h-16zM968 412h8v8h-8zM616 420h8v8h-8zM960 420h16v8h-16zM616 428h8v8h-8zM616 436h8v8h-8zM616 444h8v8h-8zM616 452h8v8h-8zM616 460h8v8h-8zM616 468h8v8h-8zM616 476h8v8h-8zM616 484h8v8h-8zM616 492h8v8h-8zM616 500h8v8h-8zM960 500h8v8h-8zM616 508h16v8h-16zM968 508h8v8h-8zM616 516h16v8h-16zM968 516h16v8h-16zM616 524h16v8h-16zM952 524h8v8h-8zM976 524h8v8h-8zM616 532h16v8h-16zM976 532h8v8h-8zM616 540h16v8h-16zM944 540h8v8h-8zM976 540h8v8h-8zM616 548h16v8h-16zM944 548h8v8h-8zM976 548h8v8h-8zM616 556h16v8h-16zM784 556h8v8h-8zM808 556h8v8h-8zM952 556h8v8h-8zM976 556h8v8h-8zM616 564h16v8h-16zM792 564h16v8h-16zM968 564h16v8h-16zM616 572h16v8h-16zM968 572h8v8h-8zM616 580h8v8h-8zM960 580h16v8h-16zM616 588h8v8h-8zM616 596h8v8h-8zM616 604h8v8h-8zM616 660h8v8h-8zM616 668h8v8h-8zM960 668h8v8h-8zM616 676h16v8h-16zM968 676h8v8h-8zM616 684h16v8h-16zM976 684h8v8h-8zM976 692h8v8h-8zM632 708h8v8h-8zM640 716h8v8h-8zM648 724h8v8h-8zM928 724h8v8h-8zM656 732h8v8h-8z"/><path fill="#de00ff" d="M952 188h8v8h-8zM968 212h8v8h-8zM616 724h8v8h-8zM944 732h8v8h-8z"/><path fill="#ff00ff" d="M960 188h24v8h-24zM960 196h24v8h-24zM960 204h24v8h-24zM960 724h8v8h-8zM624 732h8v8h-8zM952 732h24v8h-24zM960 740h16v8h-16z"/><path fill="#ba00ff" d="M944 196h8v8h-8zM616 204h8v8h-8zM624 716h8v8h-8zM632 732h8v8h-8z"/><path fill="#c600ff" d="M624 204h8v8h-8zM952 204h8v8h-8zM960 708h8v8h-8zM968 716h8v8h-8zM976 724h8v8h-8zM944 740h8v8h-8z"/><path fill="#8a00ff" d="M632 204h8v8h-8zM976 220h8v8h-8zM792 380h16v8h-16zM792 540h16v8h-16zM952 700h8v8h-8zM616 708h8v8h-8z"/><path fill="#4e00ff" d="M656 204h8v8h-8zM784 204h8v8h-8zM808 204h8v8h-8zM640 212h8v8h-8zM792 212h16v8h-16zM952 228h8v8h-8zM960 236h8v8h-8zM960 244h8v8h-8zM624 252h8v8h-8zM976 252h8v8h-8zM624 260h8v8h-8zM968 260h16v8h-16zM624 268h8v8h-8zM960 268h24v8h-24zM616 276h16v8h-16zM968 276h16v8h-16zM616 284h16v8h-16zM968 284h16v8h-16zM616 292h16v8h-16zM968 292h16v8h-16zM616 300h16v8h-16zM968 300h16v8h-16zM616 308h16v8h-16zM968 308h16v8h-16zM616 316h16v8h-16zM968 316h16v8h-16zM616 324h16v8h-16zM960 324h24v8h-24zM624 332h8v8h-8zM960 332h24v8h-24zM624 340h8v8h-8zM968 340h16v8h-16zM624 348h8v8h-8zM976 348h8v8h-8zM792 356h16v8h-16zM952 356h8v8h-8zM944 372h8v8h-8zM776 388h8v8h-8zM816 388h8v8h-8zM944 388h8v8h-8zM792 404h16v8h-16zM952 404h8v8h-8zM976 412h8v8h-8zM624 420h8v8h-8zM976 420h8v8h-8zM624 428h8v8h-8zM960 428h24v8h-24zM624 436h8v8h-8zM960 436h24v8h-24zM624 444h8v8h-8zM960 444h24v8h-24zM624 452h8v8h-8zM968 452h16v8h-16zM624 460h8v8h-8zM968 460h16v8h-16zM624 468h8v8h-8zM968 468h16v8h-16zM624 476h8v8h-8zM960 476h24v8h-24zM624 484h8v8h-8zM960 484h24v8h-24zM624 492h8v8h-8zM960 492h24v8h-24zM624 500h8v8h-8zM968 500h16v8h-16zM976 508h8v8h-8zM792 516h16v8h-16zM952 516h8v8h-8zM784 524h8v8h-8zM808 524h8v8h-8zM944 532h8v8h-8zM776 540h8v8h-8zM816 540h8v8h-8zM776 548h8v8h-8zM816 548h8v8h-8zM952 564h8v8h-8zM976 572h8v8h-8zM624 580h8v8h-8zM976 580h8v8h-8zM624 588h8v8h-8zM960 588h24v8h-24zM624 596h8v8h-8zM960 596h24v8h-24zM624 604h8v8h-8zM968 604h16v8h-16zM616 612h16v8h-16zM968 612h16v8h-16zM616 620h16v8h-16zM968 620h16v8h-16zM616 628h16v8h-16zM968 628h16v8h-16zM616 636h16v8h-16zM968 636h16v8h-16zM616 644h16v8h-16zM968 644h16v8h-16zM616 652h16v8h-16zM960 652h24v8h-24zM624 660h8v8h-8zM960 660h24v8h-24zM624 668h8v8h-8zM968 668h16v8h-16zM976 676h8v8h-8zM952 684h8v8h-8zM928 716h8v8h-8zM920 732h8v8h-8zM656 740h8v8h-8zM920 740h8v8h-8z"/><path fill="#3600ff" d="M664 204h16v8h-16zM760 204h16v8h-16zM824 204h16v8h-16zM912 204h8v8h-8zM656 212h8v8h-8zM776 212h8v8h-8zM816 212h8v8h-8zM640 220h8v8h-8zM784 220h8v8h-8zM808 220h8v8h-8zM944 228h8v8h-8zM952 348h8v8h-8zM784 356h8v8h-8zM808 356h8v8h-8zM776 364h8v8h-8zM816 364h8v8h-8zM944 364h8v8h-8zM768 380h8v8h-8zM824 380h8v8h-8zM936 388h8v8h-8zM776 396h8v8h-8zM816 396h8v8h-8zM944 396h8v8h-8zM792 412h16v8h-16zM952 412h8v8h-8zM952 508h8v8h-8zM784 516h8v8h-8zM808 516h8v8h-8zM776 524h8v8h-8zM816 524h8v8h-8zM944 524h8v8h-8zM768 540h8v8h-8zM824 540h8v8h-8zM936 548h8v8h-8zM792 572h16v8h-16zM952 676h8v8h-8zM632 700h8v8h-8zM792 700h16v8h-16zM648 708h8v8h-8zM784 708h8v8h-8zM808 708h8v8h-8zM928 708h8v8h-8zM792 716h16v8h-16zM792 724h16v8h-16zM920 724h8v8h-8zM672 732h112v8h-112zM816 732h96v8h-96zM672 740h240v8h-240z"/><path fill="#2a00ff" d="M680 204h80v8h-80zM840 204h72v8h-72zM768 212h8v8h-8zM824 212h8v8h-8zM920 212h8v8h-8zM632 228h8v8h-8zM952 244h8v8h-8zM952 340h8v8h-8zM792 348h16v8h-16zM768 372h8v8h-8zM824 372h8v8h-8zM936 372h8v8h-8zM632 380h8v8h-8zM928 380h8v8h-8zM768 388h8v8h-8zM824 388h8v8h-8zM952 420h8v8h-8zM952 500h8v8h-8zM792 508h16v8h-16zM768 532h8v8h-8zM824 532h8v8h-8zM936 532h8v8h-8zM632 540h8v8h-8zM768 548h8v8h-8zM824 548h8v8h-8zM776 564h8v8h-8zM816 564h8v8h-8zM944 564h8v8h-8zM784 572h8v8h-8zM808 572h8v8h-8zM952 580h8v8h-8zM952 668h8v8h-8zM632 692h8v8h-8zM640 700h8v8h-8zM784 700h8v8h-8zM808 700h8v8h-8zM656 716h8v8h-8zM784 716h8v8h-8zM808 716h8v8h-8zM920 716h8v8h-8zM664 724h8v8h-8zM776 724h16v8h-16zM808 724h16v8h-16zM912 724h8v8h-8z"/><path fill="#4200ff" d="M776 204h8v8h-8zM816 204h8v8h-8zM920 204h8v8h-8zM648 212h8v8h-8zM784 212h8v8h-8zM808 212h8v8h-8zM928 212h8v8h-8zM632 220h8v8h-8zM792 220h16v8h-16zM936 220h8v8h-8zM952 236h8v8h-8zM960 252h8v8h-8zM960 260h8v8h-8zM960 276h8v8h-8zM960 284h8v8h-8zM960 292h8v8h-8zM960 300h8v8h-8zM960 308h8v8h-8zM960 316h8v8h-8zM776 372h8v8h-8zM816 372h8v8h-8zM936 380h8v8h-8zM784 404h8v8h-8zM808 404h8v8h-8zM960 452h8v8h-8zM960 460h8v8h-8zM960 468h8v8h-8zM776 532h8v8h-8zM816 532h8v8h-8zM936 540h8v8h-8zM776 556h8v8h-8zM816 556h8v8h-8zM944 556h8v8h-8zM784 564h8v8h-8zM808 564h8v8h-8zM952 572h8v8h-8zM960 604h8v8h-8zM960 612h8v8h-8zM960 620h8v8h-8zM960 628h8v8h-8zM960 636h8v8h-8zM960 644h8v8h-8zM944 692h8v8h-8zM936 700h8v8h-8zM640 708h8v8h-8zM792 708h16v8h-16zM648 716h8v8h-8zM656 724h8v8h-8zM664 732h8v8h-8zM784 732h32v8h-32zM912 732h8v8h-8zM664 740h8v8h-8zM912 740h8v8h-8z"/><path fill="#a200ff" d="M624 212h8v8h-8zM960 700h8v8h-8zM968 708h8v8h-8zM976 716h8v8h-8zM632 724h8v8h-8zM936 732h8v8h-8z"/><path fill="#1e00ff" d="M664 212h8v8h-8zM760 212h8v8h-8zM832 212h8v8h-8zM648 220h8v8h-8zM776 220h8v8h-8zM816 220h8v8h-8zM928 220h8v8h-8zM640 228h8v8h-8zM792 228h16v8h-16zM936 228h8v8h-8zM632 236h8v8h-8zM944 236h8v8h-8zM952 252h8v8h-8zM952 332h8v8h-8zM784 348h8v8h-8zM808 348h8v8h-8zM776 356h8v8h-8zM816 356h8v8h-8zM632 364h8v8h-8zM632 372h8v8h-8zM640 380h8v8h-8zM760 380h8v8h-8zM832 380h8v8h-8zM632 388h8v8h-8zM632 396h8v8h-8zM768 396h8v8h-8zM824 396h8v8h-8zM936 396h8v8h-8zM776 404h8v8h-8zM816 404h8v8h-8zM944 404h8v8h-8zM784 412h8v8h-8zM808 412h8v8h-8zM952 428h8v8h-8zM952 436h8v8h-8zM952 484h8v8h-8zM952 492h8v8h-8zM784 508h8v8h-8zM808 508h8v8h-8zM776 516h8v8h-8zM816 516h8v8h-8zM944 516h8v8h-8zM632 524h8v8h-8zM632 532h8v8h-8zM640 540h8v8h-8zM928 540h8v8h-8zM632 548h16v8h-16zM632 556h8v8h-8zM768 556h8v8h-8zM824 556h8v8h-8zM936 556h8v8h-8zM952 588h8v8h-8zM952 660h8v8h-8zM944 684h8v8h-8zM656 708h8v8h-8zM776 708h8v8h-8zM816 708h8v8h-8zM664 716h8v8h-8zM776 716h8v8h-8zM816 716h8v8h-8zM672 724h104v8h-104zM824 724h88v8h-88z"/><path fill="#1200ff" d="M672 212h88v8h-88zM840 212h80v8h-80zM768 220h8v8h-8zM824 220h8v8h-8zM784 228h8v8h-8zM808 228h8v8h-8zM632 244h8v8h-8zM632 252h8v8h-8zM952 260h8v8h-8zM952 268h8v8h-8zM952 324h8v8h-8zM632 348h8v8h-8zM632 356h8v8h-8zM944 356h8v8h-8zM768 364h8v8h-8zM824 364h8v8h-8zM936 364h8v8h-8zM640 372h8v8h-8zM648 380h16v8h-16zM640 388h8v8h-8zM928 388h8v8h-8zM632 404h8v8h-8zM632 412h8v8h-8zM944 412h8v8h-8zM632 420h8v8h-8zM792 420h16v8h-16zM952 444h8v8h-8zM952 452h8v8h-8zM952 460h8v8h-8zM952 468h8v8h-8zM952 476h8v8h-8zM632 500h8v8h-8zM792 500h16v8h-16zM632 508h8v8h-8zM632 516h8v8h-8zM768 524h8v8h-8zM824 524h8v8h-8zM936 524h8v8h-8zM640 532h8v8h-8zM928 532h8v8h-8zM648 540h8v8h-8zM760 540h8v8h-8zM832 540h8v8h-8zM648 548h8v8h-8zM760 548h8v8h-8zM832 548h8v8h-8zM928 548h8v8h-8zM640 556h8v8h-8zM632 564h8v8h-8zM632 572h8v8h-8zM776 572h8v8h-8zM816 572h8v8h-8zM944 572h8v8h-8zM632 580h8v8h-8zM792 580h16v8h-16zM952 596h8v8h-8zM952 604h8v8h-8zM952 652h8v8h-8zM632 676h8v8h-8zM632 684h8v8h-8zM640 692h8v8h-8zM792 692h16v8h-16zM936 692h8v8h-8zM648 700h8v8h-8zM776 700h8v8h-8zM816 700h8v8h-8zM928 700h8v8h-8zM664 708h8v8h-8zM768 708h8v8h-8zM824 708h8v8h-8zM920 708h8v8h-8zM672 716h8v8h-8zM760 716h16v8h-16zM824 716h16v8h-16zM912 716h8v8h-8z"/><path fill="#d200ff" d="M976 212h8v8h-8zM952 716h8v8h-8zM944 724h8v8h-8zM976 740h8v8h-8z"/><path fill="#0600ff" d="M656 220h8v8h-8zM776 228h8v8h-8zM816 228h8v8h-8zM640 236h8v8h-8zM632 260h8v8h-8zM632 268h8v8h-8zM632 276h8v8h-8zM952 276h8v8h-8zM632 284h8v8h-8zM952 284h8v8h-8zM632 292h8v8h-8zM952 292h8v8h-8zM632 300h8v8h-8zM952 300h8v8h-8zM632 308h8v8h-8zM952 308h8v8h-8zM632 316h8v8h-8zM952 316h8v8h-8zM632 324h8v8h-8zM632 332h8v8h-8zM632 340h8v8h-8zM792 340h16v8h-16zM776 348h8v8h-8zM816 348h8v8h-8zM640 364h8v8h-8zM648 372h8v8h-8zM760 372h8v8h-8zM832 372h8v8h-8zM928 372h8v8h-8zM664 380h8v8h-8zM752 380h8v8h-8zM840 380h8v8h-8zM920 380h8v8h-8zM648 388h8v8h-8zM760 388h8v8h-8zM832 388h8v8h-8zM640 396h8v8h-8zM640 404h8v8h-8zM768 404h8v8h-8zM824 404h8v8h-8zM936 404h8v8h-8zM776 412h8v8h-8zM816 412h8v8h-8zM784 420h8v8h-8zM808 420h8v8h-8zM632 428h8v8h-8zM632 436h8v8h-8zM632 444h8v8h-8zM632 452h8v8h-8zM632 460h8v8h-8zM632 468h8v8h-8zM632 476h8v8h-8zM632 484h8v8h-8zM632 492h8v8h-8zM784 500h8v8h-8zM808 500h8v8h-8zM776 508h8v8h-8zM816 508h8v8h-8zM944 508h8v8h-8zM768 516h8v8h-8zM824 516h8v8h-8zM640 524h8v8h-8zM648 532h8v8h-8zM760 532h8v8h-8zM832 532h8v8h-8zM656 540h8v8h-8zM752 540h8v8h-8zM840 540h8v8h-8zM920 540h8v8h-8zM760 556h8v8h-8zM640 564h8v8h-8zM768 564h8v8h-8zM824 564h8v8h-8zM936 564h8v8h-8zM784 580h8v8h-8zM808 580h8v8h-8zM632 588h8v8h-8zM632 596h8v8h-8zM632 604h8v8h-8zM632 612h8v8h-8zM952 612h8v8h-8zM632 620h8v8h-8zM952 620h8v8h-8zM632 628h8v8h-8zM952 628h8v8h-8zM632 636h8v8h-8zM952 636h8v8h-8zM632 644h8v8h-8zM952 644h8v8h-8zM632 652h8v8h-8zM632 660h8v8h-8zM632 668h8v8h-8zM640 684h8v8h-8zM784 692h8v8h-8zM808 692h8v8h-8zM672 708h8v8h-8zM760 708h8v8h-8zM832 708h8v8h-8zM912 708h8v8h-8zM680 716h80v8h-80zM840 716h72v8h-72z"/><path fill="#0006ff" d="M664 220h8v8h-8zM752 220h16v8h-16zM832 220h16v8h-16zM648 228h8v8h-8zM928 228h8v8h-8zM792 236h16v8h-16zM936 236h8v8h-8zM640 244h8v8h-8zM944 244h8v8h-8zM784 340h8v8h-8zM808 340h8v8h-8zM944 348h8v8h-8zM640 356h8v8h-8zM768 356h8v8h-8zM824 356h8v8h-8zM760 364h8v8h-8zM672 380h8v8h-8zM736 380h16v8h-16zM848 380h16v8h-16zM912 380h8v8h-8zM656 388h8v8h-8zM752 388h8v8h-8zM840 388h8v8h-8zM648 396h8v8h-8zM760 396h8v8h-8zM832 396h8v8h-8zM928 396h8v8h-8zM640 412h8v8h-8zM944 420h8v8h-8zM792 428h16v8h-16zM792 492h16v8h-16zM944 500h8v8h-8zM640 508h8v8h-8zM760 524h8v8h-8zM832 524h8v8h-8zM928 524h8v8h-8zM656 532h8v8h-8zM752 532h8v8h-8zM840 532h8v8h-8zM664 540h16v8h-16zM744 540h8v8h-8zM848 540h8v8h-8zM912 540h8v8h-8zM656 548h8v8h-8zM752 548h8v8h-8zM840 548h8v8h-8zM920 548h8v8h-8zM648 556h8v8h-8zM928 556h8v8h-8zM640 572h8v8h-8zM768 572h8v8h-8zM792 588h16v8h-16zM640 676h8v8h-8zM944 676h8v8h-8zM776 692h8v8h-8zM816 692h8v8h-8zM656 700h8v8h-8zM680 708h72v8h-72zM848 708h64v8h-64z"/><path fill="#0012ff" d="M672 220h16v8h-16zM728 220h24v8h-24zM848 220h24v8h-24zM904 220h16v8h-16zM768 228h8v8h-8zM824 228h8v8h-8zM784 236h8v8h-8zM808 236h8v8h-8zM640 252h8v8h-8zM640 260h8v8h-8zM792 332h16v8h-16zM640 340h8v8h-8zM640 348h8v8h-8zM936 356h8v8h-8zM648 364h8v8h-8zM832 364h8v8h-8zM928 364h8v8h-8zM656 372h8v8h-8zM752 372h8v8h-8zM840 372h8v8h-8zM920 372h8v8h-8zM680 380h56v8h-56zM864 380h48v8h-48zM664 388h8v8h-8zM744 388h8v8h-8zM848 388h8v8h-8zM920 388h8v8h-8zM752 396h8v8h-8zM840 396h8v8h-8zM760 404h8v8h-8zM832 404h8v8h-8zM768 412h8v8h-8zM824 412h8v8h-8zM936 412h8v8h-8zM640 420h8v8h-8zM776 420h8v8h-8zM816 420h8v8h-8zM640 428h8v8h-8zM784 428h8v8h-8zM808 428h8v8h-8zM640 436h8v8h-8zM640 444h8v8h-8zM640 452h8v8h-8zM640 460h8v8h-8zM640 468h8v8h-8zM640 476h8v8h-8zM640 484h8v8h-8zM640 492h8v8h-8zM784 492h8v8h-8zM808 492h8v8h-8zM640 500h8v8h-8zM776 500h8v8h-8zM816 500h8v8h-8zM768 508h8v8h-8zM824 508h8v8h-8zM936 508h8v8h-8zM760 516h8v8h-8zM832 516h8v8h-8zM648 524h8v8h-8zM664 532h8v8h-8zM744 532h8v8h-8zM920 532h8v8h-8zM680 540h64v8h-64zM856 540h56v8h-56zM664 548h16v8h-16zM744 548h8v8h-8zM848 548h8v8h-8zM912 548h8v8h-8zM752 556h8v8h-8zM840 556h8v8h-8zM760 564h8v8h-8zM832 564h8v8h-8zM824 572h8v8h-8zM936 572h8v8h-8zM640 580h8v8h-8zM776 580h8v8h-8zM816 580h8v8h-8zM944 580h8v8h-8zM640 588h8v8h-8zM784 588h8v8h-8zM808 588h8v8h-8zM640 596h8v8h-8zM640 668h8v8h-8zM792 684h16v8h-16zM936 684h8v8h-8zM648 692h8v8h-8zM928 692h8v8h-8zM664 700h8v8h-8zM760 700h8v8h-8zM832 700h8v8h-8zM920 700h8v8h-8z"/><path fill="#001eff" d="M688 220h40v8h-40zM872 220h32v8h-32zM656 228h8v8h-8zM760 228h8v8h-8zM832 228h8v8h-8zM920 228h8v8h-8zM648 236h8v8h-8zM776 236h8v8h-8zM816 236h8v8h-8zM944 252h8v8h-8zM640 268h8v8h-8zM640 276h8v8h-8zM640 284h8v8h-8zM640 292h8v8h-8zM640 300h8v8h-8zM640 308h8v8h-8zM640 316h8v8h-8zM640 324h8v8h-8zM640 332h8v8h-8zM776 340h8v8h-8zM816 340h8v8h-8zM944 340h8v8h-8zM768 348h8v8h-8zM824 348h8v8h-8zM760 356h8v8h-8zM832 356h8v8h-8zM752 364h8v8h-8zM840 364h8v8h-8zM664 372h8v8h-8zM744 372h8v8h-8zM848 372h8v8h-8zM672 388h16v8h-16zM720 388h24v8h-24zM856 388h24v8h-24zM904 388h16v8h-16zM656 396h8v8h-8zM744 396h8v8h-8zM848 396h8v8h-8zM920 396h8v8h-8zM648 404h8v8h-8zM752 404h8v8h-8zM928 404h8v8h-8zM760 412h8v8h-8zM832 412h8v8h-8zM768 420h8v8h-8zM824 420h8v8h-8zM776 428h8v8h-8zM816 428h8v8h-8zM944 428h8v8h-8zM792 436h16v8h-16zM792 484h16v8h-16zM776 492h8v8h-8zM944 492h8v8h-8zM768 500h8v8h-8zM824 500h8v8h-8zM760 508h8v8h-8zM832 508h8v8h-8zM648 516h8v8h-8zM928 516h8v8h-8zM656 524h8v8h-8zM752 524h8v8h-8zM840 524h8v8h-8zM920 524h8v8h-8zM672 532h8v8h-8zM728 532h16v8h-16zM848 532h24v8h-24zM912 532h8v8h-8zM680 548h64v8h-64zM856 548h56v8h-56zM656 556h16v8h-16zM744 556h8v8h-8zM848 556h8v8h-8zM920 556h8v8h-8zM648 564h8v8h-8zM752 564h8v8h-8zM928 564h8v8h-8zM760 572h8v8h-8zM832 572h8v8h-8zM768 580h8v8h-8zM824 580h8v8h-8zM944 588h8v8h-8zM640 604h8v8h-8zM640 612h8v8h-8zM640 620h8v8h-8zM640 628h8v8h-8zM640 636h8v8h-8zM640 644h8v8h-8zM640 652h8v8h-8zM640 660h8v8h-8zM944 668h8v8h-8zM784 684h8v8h-8zM808 684h8v8h-8zM768 692h8v8h-8zM824 692h8v8h-8zM672 700h8v8h-8zM736 700h24v8h-24zM840 700h24v8h-24zM912 700h8v8h-8z"/><path fill="#0000ff" d="M920 220h8v8h-8zM640 516h8v8h-8zM936 516h8v8h-8zM832 556h8v8h-8zM768 700h8v8h-8zM824 700h8v8h-8zM752 708h8v8h-8zM840 708h8v8h-8z"/><path fill="#002aff" d="M664 228h8v8h-8zM744 228h16v8h-16zM840 228h8v8h-8zM768 236h8v8h-8zM824 236h8v8h-8zM928 236h8v8h-8zM784 244h32v8h-32zM936 244h8v8h-8zM784 332h8v8h-8zM808 332h8v8h-8zM936 348h8v8h-8zM648 356h8v8h-8zM928 356h8v8h-8zM656 364h8v8h-8zM672 372h72v8h-72zM856 372h64v8h-64zM688 388h32v8h-32zM880 388h24v8h-24zM664 396h16v8h-16zM736 396h8v8h-8zM856 396h8v8h-8zM912 396h8v8h-8zM840 404h8v8h-8zM920 404h8v8h-8zM648 412h8v8h-8zM928 412h8v8h-8zM936 420h8v8h-8zM784 436h8v8h-8zM808 436h8v8h-8zM944 436h8v8h-8zM792 444h16v8h-16zM944 444h8v8h-8zM792 476h16v8h-16zM944 476h8v8h-8zM784 484h8v8h-8zM808 484h8v8h-8zM944 484h8v8h-8zM816 492h8v8h-8zM936 500h8v8h-8zM648 508h8v8h-8zM928 508h8v8h-8zM752 516h8v8h-8zM840 516h8v8h-8zM664 524h8v8h-8zM736 524h16v8h-16zM848 524h16v8h-16zM912 524h8v8h-8zM680 532h48v8h-48zM872 532h40v8h-40zM672 556h8v8h-8zM728 556h16v8h-16zM856 556h16v8h-16zM912 556h8v8h-8zM656 564h8v8h-8zM840 564h8v8h-8zM648 572h8v8h-8zM936 580h8v8h-8zM776 588h8v8h-8zM816 588h8v8h-8zM792 596h16v8h-16zM792 676h16v8h-16zM936 676h8v8h-8zM648 684h8v8h-8zM776 684h8v8h-8zM816 684h8v8h-8zM928 684h8v8h-8zM656 692h8v8h-8zM760 692h8v8h-8zM832 692h8v8h-8zM920 692h8v8h-8zM680 700h56v8h-56zM864 700h48v8h-48z"/><path fill="#0036ff" d="M672 228h16v8h-16zM720 228h24v8h-24zM848 228h32v8h-32zM904 228h16v8h-16zM656 236h8v8h-8zM760 236h8v8h-8zM832 236h8v8h-8zM648 244h8v8h-8zM776 244h8v8h-8zM816 244h8v8h-8zM792 252h16v8h-16zM944 260h8v8h-8zM792 324h16v8h-16zM776 332h8v8h-8zM816 332h8v8h-8zM944 332h8v8h-8zM768 340h8v8h-8zM824 340h8v8h-8zM760 348h8v8h-8zM832 348h8v8h-8zM752 356h8v8h-8zM840 356h8v8h-8zM664 364h8v8h-8zM736 364h16v8h-16zM848 364h16v8h-16zM920 364h8v8h-8zM680 396h56v8h-56zM864 396h48v8h-48zM656 404h16v8h-16zM736 404h16v8h-16zM848 404h16v8h-16zM752 412h8v8h-8zM840 412h8v8h-8zM648 420h8v8h-8zM760 420h8v8h-8zM832 420h8v8h-8zM648 428h8v8h-8zM768 428h8v8h-8zM824 428h8v8h-8zM936 428h8v8h-8zM776 436h8v8h-8zM816 436h8v8h-8zM784 444h8v8h-8zM808 444h8v8h-8zM792 452h16v8h-16zM944 452h8v8h-8zM792 460h16v8h-16zM944 460h8v8h-8zM792 468h16v8h-16zM944 468h8v8h-8zM784 476h8v8h-8zM808 476h8v8h-8zM776 484h8v8h-8zM816 484h8v8h-8zM648 492h8v8h-8zM768 492h8v8h-8zM824 492h8v8h-8zM936 492h8v8h-8zM648 500h8v8h-8zM760 500h8v8h-8zM832 500h8v8h-8zM752 508h8v8h-8zM840 508h8v8h-8zM656 516h16v8h-16zM736 516h16v8h-16zM848 516h16v8h-16zM920 516h8v8h-8zM672 524h64v8h-64zM864 524h48v8h-48zM680 556h48v8h-48zM872 556h40v8h-40zM664 564h8v8h-8zM736 564h16v8h-16zM848 564h16v8h-16zM920 564h8v8h-8zM752 572h8v8h-8zM840 572h8v8h-8zM928 572h8v8h-8zM648 580h8v8h-8zM760 580h8v8h-8zM832 580h8v8h-8zM768 588h8v8h-8zM824 588h8v8h-8zM784 596h8v8h-8zM808 596h8v8h-8zM944 596h8v8h-8zM944 660h8v8h-8zM648 676h8v8h-8zM784 676h8v8h-8zM808 676h8v8h-8zM768 684h8v8h-8zM824 684h8v8h-8zM664 692h8v8h-8zM744 692h16v8h-16zM840 692h16v8h-16z"/><path fill="#0042ff" d="M688 228h32v8h-32zM880 228h24v8h-24zM664 236h8v8h-8zM752 236h8v8h-8zM840 236h8v8h-8zM920 236h8v8h-8zM768 244h8v8h-8zM824 244h8v8h-8zM928 244h8v8h-8zM648 252h8v8h-8zM784 252h8v8h-8zM808 252h8v8h-8zM936 252h8v8h-8zM944 268h8v8h-8zM784 324h8v8h-8zM808 324h8v8h-8zM944 324h8v8h-8zM936 340h8v8h-8zM648 348h8v8h-8zM752 348h8v8h-8zM928 348h8v8h-8zM656 356h8v8h-8zM744 356h8v8h-8zM848 356h8v8h-8zM920 356h8v8h-8zM672 364h16v8h-16zM712 364h24v8h-24zM864 364h24v8h-24zM904 364h16v8h-16zM672 404h64v8h-64zM864 404h56v8h-56zM656 412h16v8h-16zM736 412h16v8h-16zM848 412h16v8h-16zM920 412h8v8h-8zM752 420h8v8h-8zM840 420h8v8h-8zM928 420h8v8h-8zM760 428h8v8h-8zM832 428h8v8h-8zM648 436h8v8h-8zM768 436h8v8h-8zM824 436h8v8h-8zM936 436h8v8h-8zM648 444h8v8h-8zM776 444h8v8h-8zM816 444h8v8h-8zM648 452h8v8h-8zM776 452h16v8h-16zM808 452h8v8h-8zM648 460h8v8h-8zM784 460h8v8h-8zM808 460h8v8h-8zM648 468h8v8h-8zM784 468h8v8h-8zM808 468h8v8h-8zM648 476h8v8h-8zM776 476h8v8h-8zM816 476h8v8h-8zM648 484h8v8h-8zM768 484h8v8h-8zM824 484h8v8h-8zM936 484h8v8h-8zM760 492h8v8h-8zM832 492h8v8h-8zM752 500h8v8h-8zM840 500h8v8h-8zM928 500h8v8h-8zM656 508h8v8h-8zM736 508h16v8h-16zM848 508h16v8h-16zM920 508h8v8h-8zM672 516h64v8h-64zM864 516h56v8h-56zM672 564h64v8h-64zM864 564h56v8h-56zM656 572h8v8h-8zM744 572h8v8h-8zM848 572h8v8h-8zM920 572h8v8h-8zM752 580h8v8h-8zM840 580h8v8h-8zM928 580h8v8h-8zM648 588h8v8h-8zM936 588h8v8h-8zM776 596h8v8h-8zM816 596h8v8h-8zM792 604h16v8h-16zM944 604h8v8h-8zM944 652h8v8h-8zM784 668h32v8h-32zM936 668h8v8h-8zM768 676h16v8h-16zM816 676h16v8h-16zM928 676h8v8h-8zM656 684h8v8h-8zM752 684h16v8h-16zM832 684h8v8h-8zM920 684h8v8h-8zM672 692h72v8h-72zM856 692h64v8h-64z"/><path fill="#004eff" d="M672 236h8v8h-8zM728 236h24v8h-24zM848 236h16v8h-16zM912 236h8v8h-8zM760 244h8v8h-8zM832 244h8v8h-8zM776 252h8v8h-8zM816 252h8v8h-8zM648 260h8v8h-8zM792 260h16v8h-16zM944 276h8v8h-8zM944 284h8v8h-8zM944 308h8v8h-8zM792 316h16v8h-16zM944 316h8v8h-8zM776 324h8v8h-8zM816 324h8v8h-8zM768 332h8v8h-8zM824 332h8v8h-8zM648 340h8v8h-8zM760 340h8v8h-8zM832 340h8v8h-8zM840 348h8v8h-8zM664 356h8v8h-8zM736 356h8v8h-8zM856 356h8v8h-8zM688 364h24v8h-24zM888 364h16v8h-16zM672 412h64v8h-64zM864 412h56v8h-56zM656 420h16v8h-16zM736 420h16v8h-16zM848 420h16v8h-16zM920 420h8v8h-8zM744 428h16v8h-16zM840 428h16v8h-16zM928 428h8v8h-8zM752 436h16v8h-16zM832 436h8v8h-8zM760 444h16v8h-16zM824 444h8v8h-8zM936 444h8v8h-8zM768 452h8v8h-8zM816 452h16v8h-16zM936 452h8v8h-8zM768 460h16v8h-16zM816 460h16v8h-16zM768 468h16v8h-16zM816 468h16v8h-16zM936 468h8v8h-8zM760 476h16v8h-16zM824 476h8v8h-8zM936 476h8v8h-8zM760 484h8v8h-8zM832 484h8v8h-8zM744 492h16v8h-16zM840 492h8v8h-8zM928 492h8v8h-8zM656 500h8v8h-8zM736 500h16v8h-16zM848 500h16v8h-16zM920 500h8v8h-8zM664 508h72v8h-72zM864 508h56v8h-56zM664 572h16v8h-16zM728 572h16v8h-16zM856 572h16v8h-16zM912 572h8v8h-8zM744 580h8v8h-8zM848 580h8v8h-8zM760 588h8v8h-8zM832 588h8v8h-8zM648 596h8v8h-8zM768 596h8v8h-8zM824 596h8v8h-8zM784 604h8v8h-8zM808 604h8v8h-8zM792 612h16v8h-16zM944 612h8v8h-8zM944 620h8v8h-8zM944 628h8v8h-8zM944 636h8v8h-8zM944 644h8v8h-8zM792 660h16v8h-16zM648 668h8v8h-8zM776 668h8v8h-8zM816 668h8v8h-8zM760 676h8v8h-8zM832 676h8v8h-8zM664 684h8v8h-8zM744 684h8v8h-8zM840 684h16v8h-16z"/><path fill="#005aff" d="M680 236h48v8h-48zM864 236h48v8h-48zM656 244h8v8h-8zM744 244h16v8h-16zM840 244h16v8h-16zM920 244h8v8h-8zM768 252h8v8h-8zM824 252h8v8h-8zM928 252h8v8h-8zM776 260h16v8h-16zM808 260h16v8h-16zM936 260h8v8h-8zM648 268h8v8h-8zM792 268h16v8h-16zM944 292h8v8h-8zM944 300h8v8h-8zM792 308h16v8h-16zM784 316h8v8h-8zM808 316h8v8h-8zM648 324h8v8h-8zM768 324h8v8h-8zM648 332h8v8h-8zM760 332h8v8h-8zM832 332h8v8h-8zM936 332h8v8h-8zM752 340h8v8h-8zM840 340h8v8h-8zM928 340h8v8h-8zM656 348h8v8h-8zM744 348h8v8h-8zM848 348h8v8h-8zM920 348h8v8h-8zM672 356h24v8h-24zM704 356h32v8h-32zM864 356h56v8h-56zM672 420h64v8h-64zM864 420h56v8h-56zM656 428h16v8h-16zM728 428h16v8h-16zM856 428h16v8h-16zM912 428h16v8h-16zM656 436h8v8h-8zM744 436h8v8h-8zM840 436h16v8h-16zM920 436h16v8h-16zM752 444h8v8h-8zM832 444h16v8h-16zM928 444h8v8h-8zM752 452h16v8h-16zM832 452h8v8h-8zM928 452h8v8h-8zM760 460h8v8h-8zM832 460h8v8h-8zM936 460h8v8h-8zM760 468h8v8h-8zM832 468h8v8h-8zM928 468h8v8h-8zM752 476h8v8h-8zM832 476h16v8h-16zM928 476h8v8h-8zM656 484h8v8h-8zM744 484h16v8h-16zM840 484h16v8h-16zM920 484h16v8h-16zM656 492h16v8h-16zM728 492h16v8h-16zM848 492h16v8h-16zM912 492h16v8h-16zM664 500h72v8h-72zM864 500h56v8h-56zM680 572h48v8h-48zM872 572h40v8h-40zM656 580h16v8h-16zM736 580h8v8h-8zM856 580h8v8h-8zM920 580h8v8h-8zM752 588h8v8h-8zM840 588h8v8h-8zM928 588h8v8h-8zM760 596h8v8h-8zM832 596h8v8h-8zM936 596h8v8h-8zM648 604h8v8h-8zM776 604h8v8h-8zM816 604h8v8h-8zM648 612h8v8h-8zM784 612h8v8h-8zM808 612h8v8h-8zM648 620h8v8h-8zM792 620h16v8h-16zM648 652h8v8h-8zM792 652h16v8h-16zM648 660h8v8h-8zM784 660h8v8h-8zM808 660h8v8h-8zM936 660h8v8h-8zM768 668h8v8h-8zM824 668h8v8h-8zM928 668h8v8h-8zM656 676h8v8h-8zM752 676h8v8h-8zM840 676h8v8h-8zM920 676h8v8h-8zM672 684h16v8h-16zM720 684h24v8h-24zM856 684h24v8h-24zM896 684h24v8h-24z"/><path fill="#0066ff" d="M664 244h16v8h-16zM728 244h16v8h-16zM856 244h16v8h-16zM904 244h16v8h-16zM656 252h8v8h-8zM752 252h16v8h-16zM832 252h16v8h-16zM768 260h8v8h-8zM824 260h8v8h-8zM784 268h8v8h-8zM808 268h8v8h-8zM936 268h8v8h-8zM648 276h8v8h-8zM792 276h16v8h-16zM648 284h8v8h-8zM792 284h16v8h-16zM648 292h8v8h-8zM792 292h16v8h-16zM648 300h8v8h-8zM792 300h16v8h-16zM648 308h8v8h-8zM784 308h8v8h-8zM808 308h8v8h-8zM648 316h8v8h-8zM776 316h8v8h-8zM816 316h8v8h-8zM824 324h8v8h-8zM936 324h8v8h-8zM752 332h8v8h-8zM744 340h8v8h-8zM848 340h8v8h-8zM664 348h8v8h-8zM728 348h16v8h-16zM856 348h16v8h-16zM912 348h8v8h-8zM696 356h8v8h-8zM672 428h56v8h-56zM872 428h40v8h-40zM664 436h32v8h-32zM712 436h32v8h-32zM856 436h64v8h-64zM656 444h16v8h-16zM728 444h24v8h-24zM848 444h16v8h-16zM912 444h16v8h-16zM656 452h16v8h-16zM736 452h16v8h-16zM840 452h16v8h-16zM920 452h8v8h-8zM656 460h16v8h-16zM744 460h16v8h-16zM840 460h16v8h-16zM920 460h16v8h-16zM656 468h16v8h-16zM736 468h24v8h-24zM840 468h16v8h-16zM920 468h8v8h-8zM656 476h16v8h-16zM736 476h16v8h-16zM848 476h16v8h-16zM912 476h16v8h-16zM664 484h24v8h-24zM720 484h24v8h-24zM856 484h32v8h-32zM896 484h24v8h-24zM672 492h56v8h-56zM864 492h48v8h-48zM672 580h64v8h-64zM864 580h56v8h-56zM656 588h8v8h-8zM736 588h16v8h-16zM848 588h8v8h-8zM920 588h8v8h-8zM752 596h8v8h-8zM840 596h8v8h-8zM928 596h8v8h-8zM768 604h8v8h-8zM824 604h8v8h-8zM936 604h8v8h-8zM776 612h8v8h-8zM816 612h8v8h-8zM784 620h8v8h-8zM808 620h8v8h-8zM648 628h8v8h-8zM792 628h16v8h-16zM648 636h8v8h-8zM792 636h16v8h-16zM648 644h8v8h-8zM792 644h16v8h-16zM784 652h8v8h-8zM808 652h8v8h-8zM936 652h8v8h-8zM768 660h16v8h-16zM816 660h8v8h-8zM760 668h8v8h-8zM832 668h8v8h-8zM664 676h8v8h-8zM736 676h16v8h-16zM848 676h8v8h-8zM912 676h8v8h-8zM688 684h32v8h-32zM880 684h16v8h-16z"/><path fill="#0072ff" d="M680 244h48v8h-48zM872 244h32v8h-32zM664 252h8v8h-8zM744 252h8v8h-8zM848 252h8v8h-8zM912 252h16v8h-16zM760 260h8v8h-8zM832 260h8v8h-8zM928 260h8v8h-8zM776 268h8v8h-8zM816 268h8v8h-8zM784 276h8v8h-8zM808 276h8v8h-8zM936 276h8v8h-8zM784 284h8v8h-8zM808 284h8v8h-8zM784 300h8v8h-8zM808 300h8v8h-8zM776 308h8v8h-8zM816 308h8v8h-8zM768 316h8v8h-8zM824 316h8v8h-8zM936 316h8v8h-8zM760 324h8v8h-8zM832 324h8v8h-8zM840 332h8v8h-8zM928 332h8v8h-8zM656 340h16v8h-16zM736 340h8v8h-8zM856 340h8v8h-8zM920 340h8v8h-8zM672 348h56v8h-56zM872 348h40v8h-40zM696 436h16v8h-16zM672 444h56v8h-56zM864 444h48v8h-48zM672 452h64v8h-64zM856 452h64v8h-64zM672 460h72v8h-72zM856 460h64v8h-64zM672 468h64v8h-64zM856 468h64v8h-64zM672 476h64v8h-64zM864 476h48v8h-48zM688 484h32v8h-32zM888 484h8v8h-8zM664 588h24v8h-24zM720 588h16v8h-16zM856 588h24v8h-24zM896 588h24v8h-24zM656 596h8v8h-8zM744 596h8v8h-8zM848 596h8v8h-8zM920 596h8v8h-8zM760 604h8v8h-8zM832 604h8v8h-8zM928 604h8v8h-8zM768 612h8v8h-8zM824 612h8v8h-8zM936 612h8v8h-8zM776 620h8v8h-8zM816 620h8v8h-8zM784 628h8v8h-8zM808 628h8v8h-8zM784 636h8v8h-8zM808 636h8v8h-8zM784 644h8v8h-8zM808 644h8v8h-8zM936 644h8v8h-8zM776 652h8v8h-8zM816 652h8v8h-8zM760 660h8v8h-8zM824 660h16v8h-16zM928 660h8v8h-8zM656 668h8v8h-8zM744 668h16v8h-16zM840 668h8v8h-8zM920 668h8v8h-8zM672 676h64v8h-64zM856 676h56v8h-56z"/><path fill="#007eff" d="M672 252h72v8h-72zM856 252h56v8h-56zM656 260h8v8h-8zM744 260h16v8h-16zM840 260h8v8h-8zM920 260h8v8h-8zM760 268h16v8h-16zM824 268h16v8h-16zM928 268h8v8h-8zM768 276h16v8h-16zM816 276h8v8h-8zM776 284h8v8h-8zM816 284h8v8h-8zM936 284h8v8h-8zM776 292h16v8h-16zM808 292h16v8h-16zM936 292h8v8h-8zM776 300h8v8h-8zM816 300h8v8h-8zM936 300h8v8h-8zM768 308h8v8h-8zM824 308h8v8h-8zM936 308h8v8h-8zM760 316h8v8h-8zM832 316h8v8h-8zM752 324h8v8h-8zM840 324h8v8h-8zM928 324h8v8h-8zM656 332h8v8h-8zM736 332h16v8h-16zM848 332h16v8h-16zM920 332h8v8h-8zM672 340h24v8h-24zM712 340h24v8h-24zM864 340h56v8h-56zM688 588h32v8h-32zM880 588h16v8h-16zM664 596h16v8h-16zM728 596h16v8h-16zM856 596h16v8h-16zM904 596h16v8h-16zM656 604h8v8h-8zM744 604h16v8h-16zM840 604h16v8h-16zM920 604h8v8h-8zM760 612h8v8h-8zM832 612h8v8h-8zM928 612h8v8h-8zM768 620h8v8h-8zM824 620h8v8h-8zM936 620h8v8h-8zM776 628h8v8h-8zM816 628h8v8h-8zM936 628h8v8h-8zM776 636h8v8h-8zM816 636h8v8h-8zM936 636h8v8h-8zM768 644h16v8h-16zM816 644h16v8h-16zM760 652h16v8h-16zM824 652h16v8h-16zM928 652h8v8h-8zM656 660h8v8h-8zM752 660h8v8h-8zM840 660h8v8h-8zM920 660h8v8h-8zM664 668h16v8h-16zM728 668h16v8h-16zM848 668h24v8h-24zM904 668h16v8h-16z"/><path fill="#008aff" d="M664 260h24v8h-24zM728 260h16v8h-16zM848 260h24v8h-24zM904 260h16v8h-16zM656 268h8v8h-8zM752 268h8v8h-8zM840 268h8v8h-8zM920 268h8v8h-8zM656 276h8v8h-8zM760 276h8v8h-8zM824 276h16v8h-16zM928 276h8v8h-8zM768 284h8v8h-8zM824 284h8v8h-8zM928 284h8v8h-8zM768 292h8v8h-8zM824 292h8v8h-8zM768 300h8v8h-8zM824 300h8v8h-8zM760 308h8v8h-8zM832 308h8v8h-8zM928 308h8v8h-8zM656 316h8v8h-8zM752 316h8v8h-8zM840 316h8v8h-8zM928 316h8v8h-8zM656 324h8v8h-8zM736 324h16v8h-16zM848 324h8v8h-8zM920 324h8v8h-8zM664 332h24v8h-24zM720 332h16v8h-16zM864 332h16v8h-16zM904 332h16v8h-16zM696 340h16v8h-16zM680 596h48v8h-48zM872 596h32v8h-32zM664 604h16v8h-16zM728 604h16v8h-16zM856 604h16v8h-16zM904 604h16v8h-16zM656 612h16v8h-16zM744 612h16v8h-16zM840 612h16v8h-16zM920 612h8v8h-8zM656 620h8v8h-8zM752 620h16v8h-16zM832 620h8v8h-8zM928 620h8v8h-8zM656 628h8v8h-8zM760 628h16v8h-16zM824 628h16v8h-16zM928 628h8v8h-8zM656 636h8v8h-8zM760 636h16v8h-16zM824 636h8v8h-8zM928 636h8v8h-8zM656 644h8v8h-8zM760 644h8v8h-8zM832 644h8v8h-8zM928 644h8v8h-8zM656 652h8v8h-8zM752 652h8v8h-8zM840 652h8v8h-8zM920 652h8v8h-8zM664 660h16v8h-16zM736 660h16v8h-16zM848 660h16v8h-16zM904 660h16v8h-16zM680 668h48v8h-48zM872 668h32v8h-32z"/><path fill="#0096ff" d="M688 260h40v8h-40zM872 260h32v8h-32zM664 268h24v8h-24zM728 268h24v8h-24zM848 268h24v8h-24zM904 268h16v8h-16zM664 276h8v8h-8zM744 276h16v8h-16zM840 276h8v8h-8zM920 276h8v8h-8zM656 284h8v8h-8zM752 284h16v8h-16zM832 284h8v8h-8zM920 284h8v8h-8zM656 292h8v8h-8zM752 292h16v8h-16zM832 292h8v8h-8zM928 292h8v8h-8zM656 300h8v8h-8zM752 300h16v8h-16zM832 300h8v8h-8zM928 300h8v8h-8zM656 308h8v8h-8zM744 308h16v8h-16zM840 308h8v8h-8zM920 308h8v8h-8zM664 316h8v8h-8zM736 316h16v8h-16zM848 316h8v8h-8zM920 316h8v8h-8zM664 324h24v8h-24zM720 324h16v8h-16zM856 324h24v8h-24zM896 324h24v8h-24zM688 332h32v8h-32zM880 332h24v8h-24zM680 604h48v8h-48zM872 604h32v8h-32zM672 612h16v8h-16zM720 612h24v8h-24zM856 612h24v8h-24zM896 612h24v8h-24zM664 620h16v8h-16zM736 620h16v8h-16zM840 620h16v8h-16zM912 620h16v8h-16zM664 628h8v8h-8zM744 628h16v8h-16zM840 628h8v8h-8zM920 628h8v8h-8zM664 636h8v8h-8zM744 636h16v8h-16zM832 636h16v8h-16zM920 636h8v8h-8zM664 644h8v8h-8zM744 644h16v8h-16zM840 644h16v8h-16zM912 644h16v8h-16zM664 652h24v8h-24zM728 652h24v8h-24zM848 652h16v8h-16zM904 652h16v8h-16zM680 660h56v8h-56zM864 660h40v8h-40z"/><path fill="#00a2ff" d="M688 268h40v8h-40zM872 268h32v8h-32zM672 276h24v8h-24zM720 276h24v8h-24zM848 276h32v8h-32zM888 276h32v8h-32zM664 284h16v8h-16zM736 284h16v8h-16zM840 284h24v8h-24zM904 284h16v8h-16zM664 292h16v8h-16zM736 292h16v8h-16zM840 292h16v8h-16zM912 292h16v8h-16zM664 300h16v8h-16zM736 300h16v8h-16zM840 300h16v8h-16zM912 300h16v8h-16zM664 308h16v8h-16zM728 308h16v8h-16zM848 308h16v8h-16zM904 308h16v8h-16zM672 316h64v8h-64zM856 316h64v8h-64zM688 324h32v8h-32zM880 324h16v8h-16zM688 612h32v8h-32zM880 612h16v8h-16zM680 620h56v8h-56zM856 620h56v8h-56zM672 628h24v8h-24zM712 628h32v8h-32zM848 628h72v8h-72zM672 636h24v8h-24zM720 636h24v8h-24zM848 636h32v8h-32zM888 636h32v8h-32zM672 644h72v8h-72zM856 644h56v8h-56zM688 652h40v8h-40zM864 652h40v8h-40z"/><path fill="#00aeff" d="M696 276h24v8h-24zM880 276h8v8h-8zM680 284h56v8h-56zM864 284h40v8h-40zM680 292h56v8h-56zM856 292h56v8h-56zM680 300h56v8h-56zM856 300h56v8h-56zM680 308h48v8h-48zM864 308h40v8h-40zM696 628h16v8h-16zM696 636h24v8h-24zM880 636h8v8h-8z"/></g></g><path d="M628.5 199.5H975L962.5 278V734.5H628.5Z" fill="none" stroke="#000" stroke-width="1.3"/><path d="M627 220.5H652" stroke="#8c8c8c"/><path d="M668 220.5H963" stroke="#8c8c8c" stroke-dasharray="9 6 3 6"/><path d="M627 383.5H652" stroke="#8c8c8c"/><path d="M668 383.5H963" stroke="#8c8c8c" stroke-dasharray="9 6 3 6"/><path d="M627 546.5H652" stroke="#8c8c8c"/><path d="M668 546.5H963" stroke="#8c8c8c" stroke-dasharray="9 6 3 6"/><path d="M627 709.5H652" stroke="#8c8c8c"/><path d="M668 709.5H963" stroke="#8c8c8c" stroke-dasharray="9 6 3 6"/><path d="M651.5 195V220" stroke="#8c8c8c"/><path d="M651.5 236V734" stroke="#8c8c8c" stroke-dasharray="9 6 3 6"/><path d="M800.5 195V220" stroke="#8c8c8c"/><path d="M800.5 236V734" stroke="#8c8c8c" stroke-dasharray="9 6 3 6"/><path d="M948.5 195V220" stroke="#8c8c8c"/><path d="M948.5 236V734" stroke="#8c8c8c" stroke-dasharray="9 6 3 6"/><circle cx="651.5" cy="187.5" r="7" fill="#fff" stroke="#8c8c8c"/><text x="651.5" y="191.5" font-size="10" text-anchor="middle" fill="#8c8c8c" font-family="Liberation Sans">A</text><circle cx="800.5" cy="187.5" r="7" fill="#fff" stroke="#8c8c8c"/><text x="800.5" y="191.5" font-size="10" text-anchor="middle" fill="#8c8c8c" font-family="Liberation Sans">B</text><circle cx="948.5" cy="187.5" r="7" fill="#fff" stroke="#8c8c8c"/><text x="948.5" y="191.5" font-size="10" text-anchor="middle" fill="#8c8c8c" font-family="Liberation Sans">C</text><path d="M612 383.5H628" stroke="#8c8c8c"/><circle cx="620" cy="383.5" r="6" fill="#fff" stroke="#8c8c8c" stroke-dasharray="2 1"/><text x="620" y="387" font-size="9" text-anchor="middle" fill="#8c8c8c" font-family="Liberation Sans">3</text><path d="M612 546.5H628" stroke="#8c8c8c"/><circle cx="620" cy="546.5" r="6" fill="#fff" stroke="#8c8c8c" stroke-dasharray="2 1"/><text x="620" y="550" font-size="9" text-anchor="middle" fill="#8c8c8c" font-family="Liberation Sans">2</text><path d="M612 709.5H628" stroke="#8c8c8c"/><circle cx="620" cy="709.5" r="6" fill="#fff" stroke="#8c8c8c" stroke-dasharray="2 1"/><text x="620" y="713" font-size="9" text-anchor="middle" fill="#8c8c8c" font-family="Liberation Sans">1</text><rect x="645.5" y="214.5" width="11" height="11" fill="#ecd0cc" stroke="#000" stroke-width="1.2"/><path d="M646 220.5H652" stroke="#888"/><path d="M651.5 214V226" stroke="#888"/><path d="M653 220.5H662" stroke="#f00" stroke-width="1.3"/><path d="M651.5 209V214" stroke="#1a1a9a"/><rect x="645.5" y="377.5" width="11" height="11" fill="#ecd0cc" stroke="#000" stroke-width="1.2"/><path d="M646 383.5H652" stroke="#888"/><path d="M651.5 377V389" stroke="#888"/><path d="M653 383.5H662" stroke="#f00" stroke-width="1.3"/><path d="M651.5 372V377" stroke="#1a1a9a"/><rect x="645.5" y="540.5" width="11" height="11" fill="#ecd0cc" stroke="#000" stroke-width="1.2"/><path d="M646 546.5H652" stroke="#888"/><path d="M651.5 540V552" stroke="#888"/><path d="M653 546.5H662" stroke="#f00" stroke-width="1.3"/><path d="M651.5 535V540" stroke="#1a1a9a"/><rect x="645.5" y="703.5" width="11" height="11" fill="#ecd0cc" stroke="#000" stroke-width="1.2"/><path d="M646 709.5H652" stroke="#888"/><path d="M651.5 703V715" stroke="#888"/><path d="M653 709.5H662" stroke="#f00" stroke-width="1.3"/><path d="M651.5 698V703" stroke="#1a1a9a"/><rect x="794.5" y="214.5" width="11" height="11" fill="#ecd0cc" stroke="#000" stroke-width="1.2"/><path d="M795 220.5H801" stroke="#888"/><path d="M800.5 214V226" stroke="#888"/><path d="M802 220.5H811" stroke="#f00" stroke-width="1.3"/><path d="M800.5 209V214" stroke="#1a1a9a"/><rect x="794.5" y="377.5" width="11" height="11" fill="#ecd0cc" stroke="#000" stroke-width="1.2"/><path d="M795 383.5H801" stroke="#888"/><path d="M800.5 377V389" stroke="#888"/><path d="M802 383.5H811" stroke="#f00" stroke-width="1.3"/><path d="M800.5 372V377" stroke="#1a1a9a"/><rect x="794.5" y="540.5" width="11" height="11" fill="#ecd0cc" stroke="#000" stroke-width="1.2"/><path d="M795 546.5H801" stroke="#888"/><path d="M800.5 540V552" stroke="#888"/><path d="M802 546.5H811" stroke="#f00" stroke-width="1.3"/><path d="M800.5 535V540" stroke="#1a1a9a"/><rect x="794.5" y="703.5" width="11" height="11" fill="#ecd0cc" stroke="#000" stroke-width="1.2"/><path d="M795 709.5H801" stroke="#888"/><path d="M800.5 703V715" stroke="#888"/><path d="M802 709.5H811" stroke="#f00" stroke-width="1.3"/><path d="M800.5 698V703" stroke="#1a1a9a"/><rect x="942.5" y="214.5" width="11" height="11" fill="#ecd0cc" stroke="#000" stroke-width="1.2"/><path d="M943 220.5H949" stroke="#888"/><path d="M948.5 214V226" stroke="#888"/><path d="M950 220.5H959" stroke="#f00" stroke-width="1.3"/><path d="M948.5 209V214" stroke="#1a1a9a"/><rect x="942.5" y="377.5" width="11" height="11" fill="#ecd0cc" stroke="#000" stroke-width="1.2"/><path d="M943 383.5H949" stroke="#888"/><path d="M948.5 377V389" stroke="#888"/><path d="M950 383.5H959" stroke="#f00" stroke-width="1.3"/><path d="M948.5 372V377" stroke="#1a1a9a"/><rect x="942.5" y="540.5" width="11" height="11" fill="#ecd0cc" stroke="#000" stroke-width="1.2"/><path d="M943 546.5H949" stroke="#888"/><path d="M948.5 540V552" stroke="#888"/><path d="M950 546.5H959" stroke="#f00" stroke-width="1.3"/><path d="M948.5 535V540" stroke="#1a1a9a"/><rect x="942.5" y="703.5" width="11" height="11" fill="#ecd0cc" stroke="#000" stroke-width="1.2"/><path d="M943 709.5H949" stroke="#888"/><path d="M948.5 703V715" stroke="#888"/><path d="M950 709.5H959" stroke="#f00" stroke-width="1.3"/><path d="M948.5 698V703" stroke="#1a1a9a"/><path d="M795 399V533M728 466H862" stroke="#000" stroke-width="2"/><path d="M795 399L801 407M729 466L738 461M861 466L852 471M795 532L790 524" stroke="#000" stroke-width="1.5"/><g font-size="5.5" font-weight="bold" font-family="Liberation Sans" fill="#000"><text x="721" y="473" font-weight="normal">Xdir</text><text x="793" y="405" font-weight="normal" transform="rotate(-90 793 405)">Ydir</text><text x="801" y="459">m kN/m (T)</text><text x="801" y="464">m kN/m (B)</text><text x="803" y="472" transform="rotate(90 803 472)">m kN/m (T)</text><text x="798" y="472" transform="rotate(90 798 472)">m kN/m (B)</text></g></svg><!-- /slabsvg -->
<!-- dialog -->
<style>
.dd{position:absolute;height:21px;border:1px solid #777;border-radius:3px;background:linear-gradient(#f6f6f6 0%,#ececec 50%,#dcdcdc 51%,#e4e4e4 100%);font-size:11px;line-height:20px;padding-left:3px;color:#000;letter-spacing:-0.3px}
.dd:after{content:"";position:absolute;right:4px;top:8px;border-left:4px solid transparent;border-right:4px solid transparent;border-top:4px solid #000}
</style>
<div class="a" style="left:324px;top:158px;width:313px;height:194px;background:#b0281e;border:1px solid #8a0c08;box-shadow:inset 1px 1px 0 #c4402e"></div>
<div class="a" style="left:329px;top:183px;width:303px;height:164px;background:#ebe8e3"></div>
<div class="a" style="left:329px;top:167px;width:276px;text-align:center;font-size:12px;line-height:14px;color:#fff;letter-spacing:-0.3px">Slab forces</div>
<svg class="a" style="left:612px;top:166px" width="14" height="14"><path d="M2.5 2.5L11.5 11.5M11.5 2.5L2.5 11.5" stroke="#fff" stroke-width="1.4"/></svg>
<div class="dd" style="left:332px;top:189px;width:96px">Soil pressure</div>
<svg class="a" style="left:606px;top:189px" width="20" height="20"><circle cx="10" cy="10" r="7.8" fill="#1c86c8"/><rect x="8.5" y="8.5" width="3" height="6" fill="#fff"/><rect x="7.5" y="13.5" width="5" height="1.5" fill="#fff"/><rect x="7.5" y="8.5" width="2" height="1.3" fill="#fff"/><circle cx="10" cy="5.8" r="1.6" fill="#fff"/></svg>
<div class="a" style="left:329px;top:221px;width:303px;height:16px;background:#d5d1ca;font-size:11px;line-height:17px;padding-left:3px;color:#000;letter-spacing:-0.3px">Load combination</div>
<div class="dd" style="left:332px;top:240px;width:297px">Load case</div>
<div class="dd" style="left:332px;top:266px;width:297px">Dead</div>
<div class="a" style="left:332px;top:328px;font-size:11px;line-height:14px;color:#000;letter-spacing:-0.2px">Analytical model</div>
<div class="dd" style="left:420px;top:324px;width:209px">Local</div>
<!-- legend -->
<div class="a" style="left:324px;top:735px;width:939px;height:24px;background:#aaa"></div>
<div class="a" style="left:402px;top:735px;width:783px;height:24px;background:linear-gradient(90deg,#ff00ff 0%,#0000ff 39.6%,#00ffff 80.2%,#00ff80 100%)"></div>
<div class="a" style="left:324px;top:735px;width:939px;height:24px;font-weight:bold;font-size:14px;line-height:24px;color:#fff">
<span class="a" style="left:38px;width:80px;text-align:center">-11.47</span>
<span class="a" style="left:116px;width:80px;text-align:center">-10.33</span>
<span class="a" style="left:194px;width:80px;text-align:center">-9.18</span>
<span class="a" style="left:272px;width:80px;text-align:center">-8.03</span>
<span class="a" style="left:350px;width:80px;text-align:center">-6.88</span>
<span class="a" style="left:429px;width:80px;text-align:center">-5.74</span>
<span class="a" style="left:507px;width:80px;text-align:center">-4.59</span>
<span class="a" style="left:586px;width:80px;text-align:center">-3.44</span>
<span class="a" style="left:664px;width:80px;text-align:center">-2.29</span>
<span class="a" style="left:742px;width:80px;text-align:center">-1.15</span>
<span class="a" style="left:861px;color:#222">0psi</span>
</div>
</body></html>
